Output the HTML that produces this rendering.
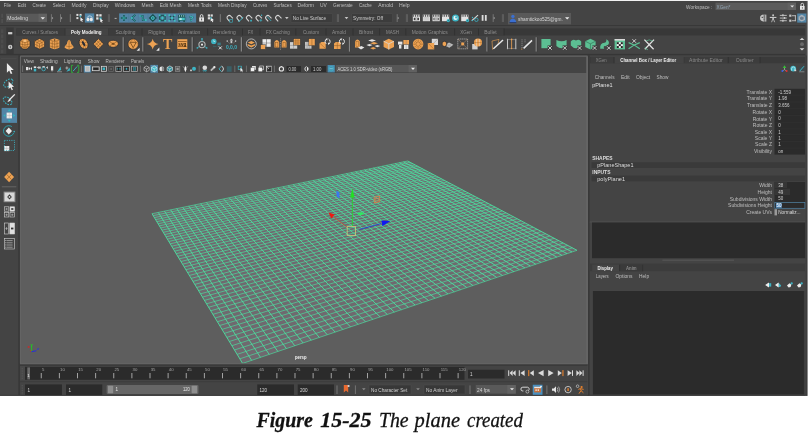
<!DOCTYPE html>
<html lang="en"><head><meta charset="utf-8"><title>Figure 15-25 The plane created</title>
<style>html,body{margin:0;padding:0;background:#ffffff;overflow:hidden}svg{display:block;opacity:0.999;will-change:transform}text{white-space:pre}</style>
</head><body>
<svg width="808" height="441" viewBox="0 0 808 441" font-family='"Liberation Sans", "DejaVu Sans", sans-serif'>
<rect x="0" y="0" width="808" height="441" fill="#ffffff" />
<defs><filter id="soft" x="0" y="0" width="808" height="400" filterUnits="userSpaceOnUse" color-interpolation-filters="sRGB"><feGaussianBlur stdDeviation="0.32"/></filter></defs>
<g filter="url(#soft)">
<rect x="0" y="0.9" width="807" height="394.6" fill="#444444" />
<rect x="0" y="0.9" width="808" height="394.6" fill="#444444" />
<rect x="806.9" y="0.9" width="1.1" height="394.6" fill="#8c8c8c" />
<rect x="805.9" y="55.5" width="1" height="340" fill="#3c3c3c" />
<rect x="0" y="0" width="808" height="1" fill="#f2f2f2" />
<text x="3.75" y="7" font-size="5" fill="#bfbfbf" textLength="7.25" lengthAdjust="spacingAndGlyphs" >File</text>
<text x="17.75" y="7" font-size="5" fill="#bfbfbf" textLength="8.25" lengthAdjust="spacingAndGlyphs" >Edit</text>
<text x="32.5" y="7" font-size="5" fill="#bfbfbf" textLength="13.5" lengthAdjust="spacingAndGlyphs" >Create</text>
<text x="52.75" y="7" font-size="5" fill="#bfbfbf" textLength="12.25" lengthAdjust="spacingAndGlyphs" >Select</text>
<text x="71.5" y="7" font-size="5" fill="#bfbfbf" textLength="15" lengthAdjust="spacingAndGlyphs" >Modify</text>
<text x="93" y="7" font-size="5" fill="#bfbfbf" textLength="15.75" lengthAdjust="spacingAndGlyphs" >Display</text>
<text x="114.75" y="7" font-size="5" fill="#bfbfbf" textLength="20.65" lengthAdjust="spacingAndGlyphs" >Windows</text>
<text x="141.6" y="7" font-size="5" fill="#bfbfbf" textLength="11.9" lengthAdjust="spacingAndGlyphs" >Mesh</text>
<text x="159.75" y="7" font-size="5" fill="#bfbfbf" textLength="21.85" lengthAdjust="spacingAndGlyphs" >Edit Mesh</text>
<text x="187.9" y="7" font-size="5" fill="#bfbfbf" textLength="23.85" lengthAdjust="spacingAndGlyphs" >Mesh Tools</text>
<text x="218" y="7" font-size="5" fill="#bfbfbf" textLength="28.6" lengthAdjust="spacingAndGlyphs" >Mesh Display</text>
<text x="253" y="7" font-size="5" fill="#bfbfbf" textLength="14.25" lengthAdjust="spacingAndGlyphs" >Curves</text>
<text x="273.5" y="7" font-size="5" fill="#bfbfbf" textLength="18.25" lengthAdjust="spacingAndGlyphs" >Surfaces</text>
<text x="297.6" y="7" font-size="5" fill="#bfbfbf" textLength="16.4" lengthAdjust="spacingAndGlyphs" >Deform</text>
<text x="319.9" y="7" font-size="5" fill="#bfbfbf" textLength="6.85" lengthAdjust="spacingAndGlyphs" >UV</text>
<text x="333" y="7" font-size="5" fill="#bfbfbf" textLength="19.75" lengthAdjust="spacingAndGlyphs" >Generate</text>
<text x="359" y="7" font-size="5" fill="#bfbfbf" textLength="12.75" lengthAdjust="spacingAndGlyphs" >Cache</text>
<text x="378.25" y="7" font-size="5" fill="#bfbfbf" textLength="14.75" lengthAdjust="spacingAndGlyphs" >Arnold</text>
<text x="399" y="7" font-size="5" fill="#bfbfbf" textLength="10.6" lengthAdjust="spacingAndGlyphs" >Help</text>
<text x="686" y="8.9" font-size="5" fill="#bfbfbf" textLength="26.4" lengthAdjust="spacingAndGlyphs" >Workspace :</text>
<rect x="715.5" y="2.75" width="80.5" height="7.25" fill="#5b5b5b" />
<rect x="787.6" y="2.75" width="8.4" height="7.25" fill="#616161" />
<text x="716.6" y="8.9" font-size="5" fill="#93a6b6" textLength="13.8" lengthAdjust="spacingAndGlyphs" >XGen*</text>
<polygon points="790.3,5.4 794.1,5.4 792.2,7.6" fill="#e0e0e0" />
<rect x="800" y="6" width="4.6" height="3.8" fill="#e6e6e6" />
<path d="M801 6 V4.6 A1.3 1.3 0 0 1 803.6 4.6 V6" fill="none" stroke="#e6e6e6" stroke-width="0.9" />
<rect x="801.9" y="7.2" width="0.8" height="1.4" fill="#444" />
<rect x="1.2" y="13.8" width="1.8" height="4" fill="#4f4f4f" />
<rect x="1.2" y="19" width="1.8" height="4" fill="#4f4f4f" />
<rect x="6" y="13.75" width="41" height="8.15" fill="#595959" />
<rect x="38.5" y="13.75" width="8.5" height="8.15" fill="#626262" />
<text x="7.25" y="20.2" font-size="5.2" fill="#d4d4d4" textLength="20.75" lengthAdjust="spacingAndGlyphs" >Modeling</text>
<polygon points="40.6,17.3 45,17.3 42.8,19.6" fill="#eaeaea" />
<line x1="51.4" y1="14.2" x2="51.4" y2="22" stroke="#8a8a8a" stroke-width="0.7" />
<polygon points="51.9,16.8 53.3,18.1 51.9,19.4" fill="#9a9a9a" />
<line x1="60.5" y1="14.2" x2="60.5" y2="22" stroke="#8a8a8a" stroke-width="0.7" />
<polygon points="61,16.8 62.4,18.1 61,19.4" fill="#9a9a9a" />
<line x1="70.5" y1="14.2" x2="70.5" y2="22" stroke="#8a8a8a" stroke-width="0.7" />
<line x1="69.7" y1="14.2" x2="69.7" y2="22" stroke="#5a5a5a" stroke-width="0.6" />
<rect x="76.4" y="13.9" width="2" height="2" fill="#e0e0e0" />
<rect x="76.4" y="17.1" width="2" height="2" fill="#e0e0e0" />
<rect x="79.6" y="13.9" width="2" height="2" fill="#e0e0e0" />
<polygon points="80.4,16.9 83.4,20.1 82,20.2 82.7,21.9 81.9,22.1 81.3,20.5 80.4,21.3" fill="#f0f0f0" />
<rect x="79.6" y="15.5" width="1.6" height="1.6" fill="#3db4c4" />
<rect x="84.9" y="13.4" width="9.3" height="9.2" fill="#5285a6" />
<ellipse cx="88" cy="19.4" rx="1.5" ry="1.9" fill="#e8e8e8" />
<ellipse cx="91.3" cy="19.4" rx="1.5" ry="1.9" fill="#e8e8e8" />
<path d="M87 17.6 A3 3 0 0 1 92.4 17.6" fill="none" stroke="#d8e8f0" stroke-width="0.7" />
<rect x="96.2" y="14.2" width="2.3" height="2.3" fill="#e4e4e4" />
<rect x="99.3" y="14.2" width="2.3" height="2.3" fill="#e4e4e4" />
<rect x="96.2" y="17.3" width="2.3" height="2.3" fill="#e4e4e4" />
<rect x="99.4" y="17.4" width="2.2" height="2.2" fill="#3db4c4" />
<polygon points="100.2,18.2 103.2,21 101.9,21.1 102.5,22.6 101.8,22.8 101.2,21.4 100.3,22.2" fill="#f0f0f0" />
<line x1="109" y1="14.2" x2="109" y2="22" stroke="#8a8a8a" stroke-width="0.7" />
<line x1="108.2" y1="14.2" x2="108.2" y2="22" stroke="#5a5a5a" stroke-width="0.6" />
<rect x="114.6" y="17.9" width="2" height="0.9" fill="#bdbdbd" />
<rect x="119.1" y="13.4" width="77" height="9.2" fill="#5285a6" />
<line x1="128.72" y1="13.4" x2="128.72" y2="22.6" stroke="#4a7898" stroke-width="0.5" />
<line x1="138.35" y1="13.4" x2="138.35" y2="22.6" stroke="#4a7898" stroke-width="0.5" />
<line x1="147.97" y1="13.4" x2="147.97" y2="22.6" stroke="#4a7898" stroke-width="0.5" />
<line x1="157.6" y1="13.4" x2="157.6" y2="22.6" stroke="#4a7898" stroke-width="0.5" />
<line x1="167.22" y1="13.4" x2="167.22" y2="22.6" stroke="#4a7898" stroke-width="0.5" />
<line x1="176.85" y1="13.4" x2="176.85" y2="22.6" stroke="#4a7898" stroke-width="0.5" />
<line x1="186.47" y1="13.4" x2="186.47" y2="22.6" stroke="#4a7898" stroke-width="0.5" />
<line x1="120.91" y1="18" x2="126.91" y2="18" stroke="#164f4c" stroke-width="1.7" />
<line x1="123.91" y1="15" x2="123.91" y2="21" stroke="#164f4c" stroke-width="1.7" />
<line x1="121.51" y1="18" x2="126.31" y2="18" stroke="#3fc0c0" stroke-width="0.7" />
<line x1="123.91" y1="15.6" x2="123.91" y2="20.4" stroke="#3fc0c0" stroke-width="0.7" />
<path d="M135.34 14.8 L131.64 18 L135.34 21.2" fill="none" stroke="#164f4c" stroke-width="1.6" />
<path d="M135.14 15 L131.84 18 L135.14 21" fill="none" stroke="#3fc0c0" stroke-width="0.6" />
<circle cx="131.74" cy="18" r="1" fill="#3fc0c0" />
<path d="M139.96 16 H142.76 V20 H145.96" fill="none" stroke="#164f4c" stroke-width="1.7" />
<path d="M140.16 16 H142.76 V20 H145.76" fill="none" stroke="#3fc0c0" stroke-width="0.7" />
<circle cx="145.76" cy="20" r="0.9" fill="#3fc0c0" />
<circle cx="140.16" cy="16" r="0.8" fill="#3fc0c0" />
<polygon points="152.79,14.8 155.99,18 152.79,21.2 149.59,18" fill="none" stroke="#164f4c" stroke-width="1.3"/>
<circle cx="152.79" cy="18" r="1.7" fill="#3fc0c0" />
<circle cx="152.79" cy="18" r="0.7" fill="#164f4c" />
<rect x="159.71" y="15.3" width="5.4" height="5.4" fill="none" stroke="#164f4c" stroke-width="1.1"/>
<line x1="159.71" y1="15.3" x2="165.11" y2="20.7" stroke="#164f4c" stroke-width="0.8" />
<line x1="165.11" y1="15.3" x2="159.71" y2="20.7" stroke="#164f4c" stroke-width="0.8" />
<circle cx="159.71" cy="15.3" r="1" fill="#3fc0c0" />
<circle cx="159.71" cy="20.7" r="1" fill="#3fc0c0" />
<circle cx="165.11" cy="15.3" r="1" fill="#3fc0c0" />
<circle cx="165.11" cy="20.7" r="1" fill="#3fc0c0" />
<circle cx="162.41" cy="18" r="1.3" fill="#3fc0c0" />
<line x1="169.34" y1="15.3" x2="174.74" y2="20.7" stroke="#164f4c" stroke-width="1.1" />
<line x1="174.74" y1="15.3" x2="169.34" y2="20.7" stroke="#164f4c" stroke-width="1.1" />
<circle cx="169.34" cy="15.3" r="1" fill="#3fc0c0" />
<circle cx="169.34" cy="20.7" r="1" fill="#3fc0c0" />
<circle cx="174.74" cy="15.3" r="1" fill="#3fc0c0" />
<circle cx="174.74" cy="20.7" r="1" fill="#3fc0c0" />
<circle cx="172.04" cy="18" r="1.2" fill="#3fc0c0" />
<rect x="178.26" y="14.8" width="6.8" height="2.4" fill="#164f4c" />
<rect x="179.06" y="15.2" width="1" height="1.5" fill="#9fd8d8" />
<rect x="181.16" y="15.2" width="1" height="1.5" fill="#9fd8d8" />
<rect x="183.26" y="15.2" width="1" height="1.5" fill="#9fd8d8" />
<rect x="178.26" y="17.6" width="6.8" height="3" fill="#3fc0c0" stroke="#164f4c" stroke-width="0.5"/>
<rect x="178.26" y="20.6" width="1.8" height="1.2" fill="#164f4c" />
<rect x="183.26" y="20.6" width="1.8" height="1.2" fill="#164f4c" />
<rect x="179.46" y="18.3" width="2.2" height="1.5" fill="#d8f0f0" />
<text x="191.29" y="21.3" font-size="7.6" fill="#3fc0c0" text-anchor="middle" font-weight="bold" stroke="#164f4c" stroke-width="0.5" paint-order="stroke">?</text>
<rect x="199.2" y="17.4" width="4.8" height="4.2" fill="#e6e6e6" />
<path d="M200.3 17.4 V15.9 A1.3 1.3 0 0 1 202.9 15.9 V17.4" fill="none" stroke="#e6e6e6" stroke-width="0.9" />
<rect x="201.1" y="18.5" width="1" height="1.9" fill="#555" />
<rect x="207.8" y="14.4" width="2.2" height="2.2" fill="#dcdcdc" />
<rect x="210.6" y="14.4" width="2.2" height="2.2" fill="#dcdcdc" />
<rect x="207.8" y="17.2" width="2.2" height="2.2" fill="#dcdcdc" />
<polygon points="210.6,17 214,20.2 212.6,20.3 213.3,22 212.5,22.3 211.8,20.7 210.7,21.6" fill="#f2f2f2" />
<rect x="210.2" y="17.2" width="1.5" height="1.5" fill="#3db4c4" />
<line x1="220.5" y1="14.2" x2="220.5" y2="22" stroke="#8a8a8a" stroke-width="0.7" />
<line x1="219.7" y1="14.2" x2="219.7" y2="22" stroke="#5a5a5a" stroke-width="0.6" />
<g transform="rotate(-42 229.5 18)">
<path d="M227.3 20.6 V17.6 A2.2 2.2 0 0 1 231.7 17.6 V20.6" fill="none" stroke="#d6d6d6" stroke-width="1.05" />
</g>
<rect x="229.8" y="19.6" width="2.6" height="2.6" fill="none" stroke="#3db4c4" stroke-width="0.6"/>
<g transform="rotate(-42 239.5 18)">
<path d="M237.3 20.6 V17.6 A2.2 2.2 0 0 1 241.7 17.6 V20.6" fill="none" stroke="#d6d6d6" stroke-width="1.05" />
</g>
<path d="M238.2 21.6 Q240.7 21 243 17" fill="none" stroke="#3db4c4" stroke-width="0.9" />
<g transform="rotate(-42 248.9 18)">
<path d="M246.7 20.6 V17.6 A2.2 2.2 0 0 1 251.1 17.6 V20.6" fill="none" stroke="#d6d6d6" stroke-width="1.05" />
</g>
<rect x="250.2" y="19.8" width="1.7" height="1.7" fill="#3db4c4" />
<g transform="rotate(-42 258.5 18)">
<path d="M256.3 20.6 V17.6 A2.2 2.2 0 0 1 260.7 17.6 V20.6" fill="none" stroke="#d6d6d6" stroke-width="1.05" />
</g>
<line x1="259.4" y1="20.3" x2="262.2" y2="20.3" stroke="#3db4c4" stroke-width="0.7" />
<line x1="260.8" y1="18.9" x2="260.8" y2="21.7" stroke="#3db4c4" stroke-width="0.7" />
<circle cx="261.6" cy="15.3" r="0.7" fill="#3db4c4" />
<g transform="rotate(-42 268.1 18)">
<path d="M265.9 20.6 V17.6 A2.2 2.2 0 0 1 270.3 17.6 V20.6" fill="none" stroke="#d6d6d6" stroke-width="1.05" />
</g>
<line x1="267" y1="16.4" x2="271.2" y2="21" stroke="#3db4c4" stroke-width="0.8" />
<g transform="rotate(-42 278.1 18)">
<path d="M275.9 20.6 V17.6 A2.2 2.2 0 0 1 280.3 17.6 V20.6" fill="none" stroke="#d6d6d6" stroke-width="1.05" />
</g>
<polygon points="285,17.1 288.6,17.1 286.8,19.2" fill="#c6c6c6" />
<rect x="291" y="13.75" width="41.4" height="8.5" fill="#3c3c3c" />
<rect x="291" y="13.75" width="41.4" height="8.5" fill="none" stroke="#4c4c4c" stroke-width="0.5"/>
<text x="292.8" y="19.8" font-size="5" fill="#d0d0d0" textLength="33.2" lengthAdjust="spacingAndGlyphs" >No Live Surface</text>
<line x1="338" y1="14.2" x2="338" y2="22" stroke="#8a8a8a" stroke-width="0.7" />
<line x1="337.2" y1="14.2" x2="337.2" y2="22" stroke="#5a5a5a" stroke-width="0.6" />
<polygon points="344.7,17.1 348.3,17.1 346.5,19.2" fill="#c6c6c6" />
<rect x="351.75" y="13.75" width="40.65" height="8.5" fill="#3c3c3c" />
<rect x="351.75" y="13.75" width="40.65" height="8.5" fill="none" stroke="#4c4c4c" stroke-width="0.5"/>
<text x="353" y="19.8" font-size="5" fill="#d0d0d0" textLength="30" lengthAdjust="spacingAndGlyphs" >Symmetry: Off</text>
<line x1="397.2" y1="14.2" x2="397.2" y2="22" stroke="#8a8a8a" stroke-width="0.7" />
<polygon points="397.7,16.8 399.1,18.1 397.7,19.4" fill="#9a9a9a" />
<line x1="407" y1="14.2" x2="407" y2="22" stroke="#8a8a8a" stroke-width="0.7" />
<line x1="406.2" y1="14.2" x2="406.2" y2="22" stroke="#5a5a5a" stroke-width="0.6" />
<rect x="412.8" y="14.6" width="7.2" height="6.6" fill="#e2e2e2" />
<rect x="413.3" y="14.6" width="0.8" height="2.2" fill="#3e3e3e" />
<rect x="415.1" y="14.6" width="0.8" height="2.2" fill="#3e3e3e" />
<rect x="416.9" y="14.6" width="0.8" height="2.2" fill="#3e3e3e" />
<rect x="418.7" y="14.6" width="0.8" height="2.2" fill="#3e3e3e" />
<rect x="413.8" y="17.8" width="5.2" height="2.4" fill="#3e3e3e" />
<rect x="415.4" y="18.2" width="2" height="1.6" fill="#e2e2e2" />
<rect x="422.8" y="14.6" width="7.2" height="6.6" fill="#e2e2e2" />
<rect x="423.3" y="14.6" width="0.8" height="2.2" fill="#3e3e3e" />
<rect x="425.1" y="14.6" width="0.8" height="2.2" fill="#3e3e3e" />
<rect x="426.9" y="14.6" width="0.8" height="2.2" fill="#3e3e3e" />
<rect x="428.7" y="14.6" width="0.8" height="2.2" fill="#3e3e3e" />
<line x1="423.4" y1="17.6" x2="429.4" y2="17.6" stroke="#9a9a9a" stroke-width="0.4" />
<line x1="423.4" y1="18.8" x2="429.4" y2="18.8" stroke="#9a9a9a" stroke-width="0.4" />
<line x1="423.4" y1="20" x2="429.4" y2="20" stroke="#9a9a9a" stroke-width="0.4" />
<rect x="432.5" y="14.6" width="7.2" height="6.6" fill="#e2e2e2" />
<rect x="433" y="14.6" width="0.8" height="2.2" fill="#3e3e3e" />
<rect x="434.8" y="14.6" width="0.8" height="2.2" fill="#3e3e3e" />
<rect x="436.6" y="14.6" width="0.8" height="2.2" fill="#3e3e3e" />
<rect x="438.4" y="14.6" width="0.8" height="2.2" fill="#3e3e3e" />
<rect x="433.5" y="17.8" width="5.2" height="2.4" fill="#3e3e3e" />
<rect x="434.3" y="18.3" width="3.6" height="1.4" fill="#e2e2e2" />
<rect x="442" y="14.6" width="7.2" height="6.6" fill="#e2e2e2" />
<rect x="442.5" y="14.6" width="0.8" height="2.2" fill="#3e3e3e" />
<rect x="444.3" y="14.6" width="0.8" height="2.2" fill="#3e3e3e" />
<rect x="446.1" y="14.6" width="0.8" height="2.2" fill="#3e3e3e" />
<rect x="447.9" y="14.6" width="0.8" height="2.2" fill="#3e3e3e" />
<circle cx="448.3" cy="20.6" r="1.6" fill="#3db4c4" />
<circle cx="448.3" cy="20.6" r="0.6" fill="#1f6f78" />
<circle cx="455.5" cy="17.9" r="3.5" fill="#3db4c4" />
<circle cx="455.5" cy="17.9" r="2.1" fill="#e8f4f6" />
<circle cx="456.2" cy="17.4" r="1.1" fill="#3db4c4" />
<rect x="461.2" y="14.6" width="7.2" height="6.6" fill="#e2e2e2" />
<rect x="461.7" y="14.6" width="0.8" height="2.2" fill="#3e3e3e" />
<rect x="463.5" y="14.6" width="0.8" height="2.2" fill="#3e3e3e" />
<rect x="465.3" y="14.6" width="0.8" height="2.2" fill="#3e3e3e" />
<rect x="467.1" y="14.6" width="0.8" height="2.2" fill="#3e3e3e" />
<circle cx="467.5" cy="20.6" r="1.6" fill="#3db4c4" />
<circle cx="467.5" cy="20.6" r="0.6" fill="#1f6f78" />
<path d="M471.8 20.6 L478 15.2" fill="none" stroke="#dcdcdc" stroke-width="1.1" />
<circle cx="476.4" cy="19.8" r="1.7" fill="none" stroke="#3db4c4" stroke-width="0.8"/>
<circle cx="472.5" cy="17.5" r="0.7" fill="#3db4c4" />
<circle cx="472.3" cy="20.5" r="0.7" fill="#3db4c4" />
<rect x="481.7" y="15" width="1.8" height="5.8" fill="#dcdcdc" />
<rect x="484.9" y="15" width="1.8" height="5.8" fill="#dcdcdc" />
<line x1="493.2" y1="14.2" x2="493.2" y2="22" stroke="#8a8a8a" stroke-width="0.7" />
<polygon points="493.7,16.8 495.1,18.1 493.7,19.4" fill="#9a9a9a" />
<line x1="503" y1="14.2" x2="503" y2="22" stroke="#8a8a8a" stroke-width="0.7" />
<line x1="502.2" y1="14.2" x2="502.2" y2="22" stroke="#5a5a5a" stroke-width="0.6" />
<rect x="508" y="13" width="63" height="11.4" fill="#595959" />
<circle cx="512.9" cy="16.4" r="1.7" fill="#3b6fd0" />
<path d="M509.6 22.6 Q509.8 19 512.9 18.6 Q516 19 516.2 22.6 Z" fill="#3b6fd0" stroke="none" stroke-width="1" />
<line x1="509.4" y1="22.7" x2="516.4" y2="22.7" stroke="#1c2c5c" stroke-width="0.8" />
<text x="518" y="20.8" font-size="5" fill="#d6d6d6" textLength="44.75" lengthAdjust="spacingAndGlyphs" >shamtickoo525@gm.</text>
<polygon points="565,17.3 569.4,17.3 567.2,19.6" fill="#ececec" />
<rect x="797.2" y="13.5" width="9.2" height="9.1" fill="#5285a6" />
<path d="M764.6 14.6 Q760 14.6 760 18 Q760 21.6 764.6 21.6 Z" fill="#c6c6c6" stroke="none" stroke-width="1" />
<rect x="763.2" y="15.6" width="3.4" height="0.9" fill="#555" />
<rect x="763.2" y="17.5" width="3.4" height="0.9" fill="#555" />
<rect x="763.2" y="19.4" width="3.4" height="0.9" fill="#555" />
<rect x="765.2" y="14.6" width="1.1" height="7" fill="#c6c6c6" />
<rect x="761.6" y="16.8" width="1.4" height="1.2" fill="#555" />
<circle cx="773.1" cy="15.2" r="1" fill="#c6c6c6" />
<rect x="769.8" y="16.9" width="6.6" height="1.1" fill="#c6c6c6" />
<rect x="772.3" y="16.9" width="1.6" height="3" fill="#c6c6c6" />
<line x1="772.5" y1="19.6" x2="771.6" y2="22.2" stroke="#c6c6c6" stroke-width="0.8" />
<line x1="773.7" y1="19.6" x2="774.6" y2="22.2" stroke="#c6c6c6" stroke-width="0.8" />
<rect x="779.8" y="14.9" width="7" height="0.9" fill="#c6c6c6" />
<rect x="782.2" y="14.3" width="1.4" height="2" fill="#c6c6c6" />
<rect x="779.8" y="17.6" width="7" height="0.9" fill="#c6c6c6" />
<rect x="783.8" y="17" width="1.4" height="2" fill="#c6c6c6" />
<rect x="779.8" y="20.3" width="7" height="0.9" fill="#c6c6c6" />
<rect x="782.2" y="19.7" width="1.4" height="2" fill="#c6c6c6" />
<rect x="789.2" y="14.6" width="2.2" height="2.2" fill="#c6c6c6" />
<rect x="789.2" y="19.6" width="2.2" height="2.2" fill="#c6c6c6" />
<rect x="792" y="15.3" width="3.8" height="0.9" fill="#c6c6c6" />
<rect x="792" y="20.3" width="3.8" height="0.9" fill="#c6c6c6" />
<rect x="794.9" y="15.3" width="0.9" height="5.9" fill="#c6c6c6" />
<polygon points="801.8,14.8 805,16.4 805,20 801.8,21.6 798.6,20 798.6,16.4" fill="#aab4bc" />
<polygon points="801.8,16.6 803.6,17.5 803.6,19.2 801.8,20.1 800,19.2 800,17.5" fill="#66788a" />
<line x1="798.6" y1="16.4" x2="801.8" y2="18" stroke="#7a8894" stroke-width="0.5" />
<line x1="805" y1="16.4" x2="801.8" y2="18" stroke="#7a8894" stroke-width="0.5" />
<rect x="0" y="25" width="805.2" height="1" fill="#383838" />
<rect x="1" y="29.4" width="2.4" height="3.8" fill="#4c4c4c" />
<rect x="1" y="34.45" width="2.4" height="3.8" fill="#4c4c4c" />
<rect x="1" y="39.5" width="2.4" height="3.8" fill="#4c4c4c" />
<rect x="1" y="44.55" width="2.4" height="3.8" fill="#4c4c4c" />
<rect x="1" y="49.6" width="2.4" height="3.8" fill="#4c4c4c" />
<rect x="6.25" y="27.6" width="7.5" height="26.4" fill="#383838" />
<rect x="8.1" y="32.1" width="4.2" height="2.2" fill="#cfcfcf" />
<circle cx="10.2" cy="47" r="2.2" fill="#cdcdcd" />
<rect x="9.8" y="45.8" width="0.8" height="2.4" fill="#444" />
<rect x="16.25" y="28.4" width="788.95" height="7" fill="#383838" />
<rect x="16.25" y="28.4" width="48.5" height="7" fill="#3c3c3c" />
<line x1="65.25" y1="28.4" x2="65.25" y2="35.4" stroke="#303030" stroke-width="0.8" />
<text x="22.25" y="34" font-size="5" fill="#8e8e8e" textLength="35.75" lengthAdjust="spacingAndGlyphs" >Curves / Surfaces</text>
<rect x="65.4" y="28.4" width="42.8" height="7.2" fill="#444444" />
<text x="71" y="34" font-size="5" fill="#f0f0f0" font-weight="bold" textLength="30.6" lengthAdjust="spacingAndGlyphs" >Poly Modeling</text>
<rect x="108.6" y="28.4" width="33" height="7" fill="#3c3c3c" />
<line x1="142.1" y1="28.4" x2="142.1" y2="35.4" stroke="#303030" stroke-width="0.8" />
<text x="115.4" y="34" font-size="5" fill="#8e8e8e" textLength="20" lengthAdjust="spacingAndGlyphs" >Sculpting</text>
<rect x="142.6" y="28.4" width="29" height="7" fill="#3c3c3c" />
<line x1="172.1" y1="28.4" x2="172.1" y2="35.4" stroke="#303030" stroke-width="0.8" />
<text x="148.25" y="34" font-size="5" fill="#8e8e8e" textLength="17.15" lengthAdjust="spacingAndGlyphs" >Rigging</text>
<rect x="172.6" y="28.4" width="34.6" height="7" fill="#3c3c3c" />
<line x1="207.7" y1="28.4" x2="207.7" y2="35.4" stroke="#303030" stroke-width="0.8" />
<text x="177.9" y="34" font-size="5" fill="#8e8e8e" textLength="22.5" lengthAdjust="spacingAndGlyphs" >Animation</text>
<rect x="208.2" y="28.4" width="33.8" height="7" fill="#3c3c3c" />
<line x1="242.5" y1="28.4" x2="242.5" y2="35.4" stroke="#303030" stroke-width="0.8" />
<text x="213" y="34" font-size="5" fill="#8e8e8e" textLength="22.75" lengthAdjust="spacingAndGlyphs" >Rendering</text>
<rect x="243" y="28.4" width="16.6" height="7" fill="#3c3c3c" />
<line x1="260.1" y1="28.4" x2="260.1" y2="35.4" stroke="#303030" stroke-width="0.8" />
<text x="248" y="34" font-size="5" fill="#8e8e8e" textLength="5.25" lengthAdjust="spacingAndGlyphs" >FX</text>
<rect x="260.6" y="28.4" width="34.8" height="7" fill="#3c3c3c" />
<line x1="295.9" y1="28.4" x2="295.9" y2="35.4" stroke="#303030" stroke-width="0.8" />
<text x="266" y="34" font-size="5" fill="#8e8e8e" textLength="23.75" lengthAdjust="spacingAndGlyphs" >FX Caching</text>
<rect x="296.4" y="28.4" width="29.2" height="7" fill="#3c3c3c" />
<line x1="326.1" y1="28.4" x2="326.1" y2="35.4" stroke="#303030" stroke-width="0.8" />
<text x="303" y="34" font-size="5" fill="#8e8e8e" textLength="16" lengthAdjust="spacingAndGlyphs" >Custom</text>
<rect x="326.6" y="28.4" width="26" height="7" fill="#3c3c3c" />
<line x1="353.1" y1="28.4" x2="353.1" y2="35.4" stroke="#303030" stroke-width="0.8" />
<text x="332" y="34" font-size="5" fill="#8e8e8e" textLength="14" lengthAdjust="spacingAndGlyphs" >Arnold</text>
<rect x="353.6" y="28.4" width="25.6" height="7" fill="#3c3c3c" />
<line x1="379.7" y1="28.4" x2="379.7" y2="35.4" stroke="#303030" stroke-width="0.8" />
<text x="359" y="34" font-size="5" fill="#8e8e8e" textLength="14" lengthAdjust="spacingAndGlyphs" >Bifrost</text>
<rect x="380.2" y="28.4" width="25.2" height="7" fill="#3c3c3c" />
<line x1="405.9" y1="28.4" x2="405.9" y2="35.4" stroke="#303030" stroke-width="0.8" />
<text x="386" y="34" font-size="5" fill="#8e8e8e" textLength="13" lengthAdjust="spacingAndGlyphs" >MASH</text>
<rect x="406.4" y="28.4" width="47.8" height="7" fill="#3c3c3c" />
<line x1="454.7" y1="28.4" x2="454.7" y2="35.4" stroke="#303030" stroke-width="0.8" />
<text x="411.75" y="34" font-size="5" fill="#8e8e8e" textLength="36" lengthAdjust="spacingAndGlyphs" >Motion Graphics</text>
<rect x="455.2" y="28.4" width="22.8" height="7" fill="#3c3c3c" />
<line x1="478.5" y1="28.4" x2="478.5" y2="35.4" stroke="#303030" stroke-width="0.8" />
<text x="460.25" y="34" font-size="5" fill="#8e8e8e" textLength="11.5" lengthAdjust="spacingAndGlyphs" >XGen</text>
<rect x="479" y="28.4" width="24.6" height="7" fill="#3c3c3c" />
<line x1="504.1" y1="28.4" x2="504.1" y2="35.4" stroke="#303030" stroke-width="0.8" />
<text x="484.25" y="34" font-size="5" fill="#8e8e8e" textLength="12.5" lengthAdjust="spacingAndGlyphs" >Bullet</text>
<line x1="123.25" y1="37.2" x2="123.25" y2="51.6" stroke="#8c8c8c" stroke-width="1.2" />
<line x1="124.15" y1="37.2" x2="124.15" y2="51.6" stroke="#343434" stroke-width="0.5" />
<line x1="142.9" y1="37.2" x2="142.9" y2="51.6" stroke="#8c8c8c" stroke-width="1.2" />
<line x1="143.8" y1="37.2" x2="143.8" y2="51.6" stroke="#343434" stroke-width="0.5" />
<line x1="192.25" y1="37.2" x2="192.25" y2="51.6" stroke="#8c8c8c" stroke-width="1.2" />
<line x1="193.15" y1="37.2" x2="193.15" y2="51.6" stroke="#343434" stroke-width="0.5" />
<line x1="241.4" y1="37.2" x2="241.4" y2="51.6" stroke="#8c8c8c" stroke-width="1.2" />
<line x1="242.3" y1="37.2" x2="242.3" y2="51.6" stroke="#343434" stroke-width="0.5" />
<line x1="349.5" y1="37.2" x2="349.5" y2="51.6" stroke="#8c8c8c" stroke-width="1.2" />
<line x1="350.4" y1="37.2" x2="350.4" y2="51.6" stroke="#343434" stroke-width="0.5" />
<line x1="487" y1="37.2" x2="487" y2="51.6" stroke="#8c8c8c" stroke-width="1.2" />
<line x1="487.9" y1="37.2" x2="487.9" y2="51.6" stroke="#343434" stroke-width="0.5" />
<line x1="536.25" y1="37.2" x2="536.25" y2="51.6" stroke="#8c8c8c" stroke-width="1.2" />
<line x1="537.15" y1="37.2" x2="537.15" y2="51.6" stroke="#343434" stroke-width="0.5" />
<polygon points="22.83,38.5 27.07,38.5 30,41.57 30,46.03 27.07,49.1 22.83,49.1 19.9,46.03 19.9,41.57" fill="#eda253" stroke="#26282e" stroke-width="0.7" stroke-linejoin="round"/>
<path d="M20.4 41.41 Q24.95 43.31 29.5 41.41" fill="none" stroke="#8c5a24" stroke-width="0.6" />
<path d="M20.4 44.06 Q24.95 45.96 29.5 44.06" fill="none" stroke="#8c5a24" stroke-width="0.6" />
<path d="M20.4 46.45 Q24.95 48.35 29.5 46.45" fill="none" stroke="#8c5a24" stroke-width="0.6" />
<path d="M23.43 38.77 Q21.16 43.8 23.43 48.83" fill="none" stroke="#8c5a24" stroke-width="0.55" />
<path d="M24.95 38.77 Q24.95 43.8 24.95 48.83" fill="none" stroke="#8c5a24" stroke-width="0.55" />
<path d="M26.46 38.77 Q28.74 43.8 26.46 48.83" fill="none" stroke="#8c5a24" stroke-width="0.55" />
<ellipse cx="24.95" cy="40.88" rx="1.77" ry="1.06" fill="#f6bd7a" />
<polygon points="39.5,38.5 44.6,41.09 44.6,46.71 39.5,49.3 34.4,46.71 34.4,41.09" fill="#eda253" stroke="#26282e" stroke-width="0.7" stroke-linejoin="round"/>
<path d="M34.4 41.09 L39.5 43.7 L44.6 41.09 M39.5 43.7 V49.3" fill="none" stroke="#8c5a24" stroke-width="0.65" />
<path d="M36.95 39.8 L42.05 42.39 V48 M42.05 39.8 L36.95 42.39 V48 M34.4 43.9 L39.5 46.6 L44.6 43.9" fill="none" stroke="#8c5a24" stroke-width="0.5" />
<path d="M49.9 40.1 Q54.65 36.9 59.4 40.1 V47.6 Q54.65 50.8 49.9 47.6 Z" fill="#eda253" stroke="none" stroke-width="1" stroke="#26282e" stroke-width="0.7" stroke-linejoin="round"/>
<path d="M49.9 40.1 Q54.65 43 59.4 40.1" fill="none" stroke="#8c5a24" stroke-width="0.55" />
<line x1="52.27" y1="41.2" x2="52.27" y2="48.8" stroke="#8c5a24" stroke-width="0.6" />
<line x1="54.65" y1="41.2" x2="54.65" y2="48.8" stroke="#8c5a24" stroke-width="0.6" />
<line x1="57.02" y1="41.2" x2="57.02" y2="48.8" stroke="#8c5a24" stroke-width="0.6" />
<path d="M49.9 43.03 Q54.65 45.43 59.4 43.03" fill="none" stroke="#8c5a24" stroke-width="0.55" />
<path d="M49.9 46.03 Q54.65 48.43 59.4 46.03" fill="none" stroke="#8c5a24" stroke-width="0.55" />
<circle cx="54.65" cy="40" r="0.7" fill="#3a2a18" />
<path d="M69.1 39.8 Q70.7 40.2 71.3 44.1 Q74.1 46.7 73.5 47.8 Q69.1 51.3 64.7 47.8 Q64.1 46.7 66.9 44.1 Q67.5 40.2 69.1 39.8 Z" fill="#eda253" stroke="none" stroke-width="1" stroke="#26282e" stroke-width="0.7" stroke-linejoin="round"/>
<line x1="69.1" y1="40.4" x2="69.1" y2="49.2" stroke="#8c5a24" stroke-width="0.6" />
<path d="M65.58 45.9 Q69.1 47.5 72.62 45.9" fill="none" stroke="#8c5a24" stroke-width="0.5" />
<g transform="rotate(-30 83.6 43.7)">
<ellipse cx="83.6" cy="43.7" rx="4.1" ry="5.6" fill="#eda253" stroke="#26282e" stroke-width="0.7" stroke-linejoin="round"/>
<ellipse cx="83.6" cy="43.7" rx="1.2" ry="2.9" fill="#2a2c34" />
<line x1="84.8" y1="43.7" x2="87.7" y2="43.7" stroke="#8c5a24" stroke-width="0.5" />
<line x1="84.45" y1="45.75" x2="86.5" y2="47.66" stroke="#8c5a24" stroke-width="0.5" />
<line x1="83.6" y1="46.6" x2="83.6" y2="49.3" stroke="#8c5a24" stroke-width="0.5" />
<line x1="82.75" y1="45.75" x2="80.7" y2="47.66" stroke="#8c5a24" stroke-width="0.5" />
<line x1="82.4" y1="43.7" x2="79.5" y2="43.7" stroke="#8c5a24" stroke-width="0.5" />
<line x1="82.75" y1="41.65" x2="80.7" y2="39.74" stroke="#8c5a24" stroke-width="0.5" />
<line x1="83.6" y1="40.8" x2="83.6" y2="38.1" stroke="#8c5a24" stroke-width="0.5" />
<line x1="84.45" y1="41.65" x2="86.5" y2="39.74" stroke="#8c5a24" stroke-width="0.5" />
</g>
<polygon points="98.4,38.6 103.6,43.95 98.4,49.3 93.2,43.95" fill="#eda253" stroke="#26282e" stroke-width="0.7" stroke-linejoin="round"/>
<line x1="94.93" y1="42.17" x2="100.13" y2="47.52" stroke="#8c5a24" stroke-width="0.6" />
<line x1="101.87" y1="42.17" x2="96.67" y2="47.52" stroke="#8c5a24" stroke-width="0.6" />
<line x1="96.67" y1="40.38" x2="101.87" y2="45.73" stroke="#8c5a24" stroke-width="0.6" />
<line x1="100.13" y1="40.38" x2="94.93" y2="45.73" stroke="#8c5a24" stroke-width="0.6" />
<ellipse cx="113.15" cy="43.8" rx="5.15" ry="3.5" fill="#eda253" stroke="#26282e" stroke-width="0.7" stroke-linejoin="round"/>
<ellipse cx="113.15" cy="43.8" rx="1.44" ry="1.05" fill="#5a3a18" />
<line x1="109.29" y1="41.52" x2="117.01" y2="46.07" stroke="#8c5a24" stroke-width="0.6" />
<line x1="117.01" y1="41.52" x2="109.29" y2="46.07" stroke="#8c5a24" stroke-width="0.6" />
<ellipse cx="133.2" cy="44.1" rx="5.3" ry="5.3" fill="#eda253" stroke="#26282e" stroke-width="0.7" stroke-linejoin="round"/>
<polygon points="130.2,42.3 136.2,42.3 133.2,47.7" fill="none" stroke="#6a4216" stroke-width="0.8"/>
<path d="M133.2 38.8 L130.2 42.3 M133.2 38.8 L136.2 42.3 M127.9 45.1 L130.2 42.3 M138.5 45.1 L136.2 42.3 M133.2 49.4 V47.7" fill="none" stroke="#8c5a24" stroke-width="0.45" />
<polygon points="139.6,47.8 139.6,50.8 136.6,50.8" fill="#e8e8e8" />
<path d="M152.7 38.7 Q153.6 43.2 158.5 44.1 Q153.6 45 152.7 49.5 Q151.8 45 146.9 44.1 Q151.8 43.2 152.7 38.7 Z" fill="#eda253" stroke="none" stroke-width="1" />
<polygon points="159.4,47.6 159.4,50.8 156.2,50.8" fill="#e8e8e8" />
<text x="167.6" y="49.2" font-size="14" fill="#eda253" text-anchor="middle" font-weight="bold" font-family='"Liberation Serif", "DejaVu Serif", serif' >T</text>
<rect x="177.3" y="39.2" width="10" height="9.8" fill="#eda253" />
<rect x="178" y="41.3" width="8.6" height="0.7" fill="#7a4a1a" />
<rect x="178" y="46.3" width="8.6" height="0.7" fill="#7a4a1a" />
<text x="182.3" y="45.5" font-size="4.6" fill="#3a2208" text-anchor="middle" font-weight="bold" >svg</text>
<circle cx="202" cy="44.6" r="3.1" fill="none" stroke="#b4b4b4" stroke-width="1.1"/>
<rect x="201.1" y="43.7" width="1.8" height="1.8" fill="#f4f4f4" />
<line x1="202" y1="41.4" x2="202" y2="38.8" stroke="#3db4c4" stroke-width="0.8" />
<line x1="199.4" y1="46.4" x2="197.4" y2="47.8" stroke="#3db4c4" stroke-width="0.8" />
<line x1="204.6" y1="46.4" x2="206.6" y2="47.8" stroke="#3db4c4" stroke-width="0.8" />
<rect x="201.2" y="38.2" width="1.6" height="1.4" fill="#3db4c4" />
<rect x="196.6" y="47.2" width="1.5" height="1.4" fill="#3db4c4" />
<rect x="205.9" y="47.2" width="1.5" height="1.4" fill="#3db4c4" />
<circle cx="213.8" cy="41.4" r="2.7" fill="#3db4c4" />
<path d="M213.8 39.8 V41.5 H215.2" fill="none" stroke="#e8f8fa" stroke-width="0.6" />
<rect x="217.4" y="42.6" width="3.3" height="2.7" fill="#3a7c88" />
<line x1="213.8" y1="44.6" x2="213.8" y2="47.6" stroke="#2a8a98" stroke-width="0.5" stroke-dasharray="0.8 0.6"/>
<line x1="213.8" y1="46.6" x2="218" y2="46.6" stroke="#2a8a98" stroke-width="0.5" stroke-dasharray="0.8 0.6"/>
<line x1="218.8" y1="46.4" x2="221.8" y2="49.4" stroke="#f0f0f0" stroke-width="0.9" />
<line x1="221.8" y1="46.4" x2="218.8" y2="49.4" stroke="#f0f0f0" stroke-width="0.9" />
<polygon points="231.4,38.4 233.2,40.6 229.6,40.6" fill="#c8c8c8" />
<rect x="230.5" y="40.6" width="1.8" height="2.6" fill="#c8c8c8" />
<line x1="229.6" y1="43.4" x2="227.4" y2="41.4" stroke="#bdbdbd" stroke-width="0.5" stroke-dasharray="0.7 0.5"/>
<line x1="233.2" y1="43.4" x2="235.4" y2="41.4" stroke="#bdbdbd" stroke-width="0.5" stroke-dasharray="0.7 0.5"/>
<rect x="226.6" y="40.4" width="1.3" height="1.3" fill="#cfcfcf" />
<rect x="234.9" y="40.4" width="1.3" height="1.3" fill="#cfcfcf" />
<text x="225.9" y="49" font-size="5" fill="#3db4c4" font-weight="bold" textLength="11.1" lengthAdjust="spacingAndGlyphs" >0,0,0</text>
<circle cx="251.3" cy="43.9" r="5" fill="none" stroke="#bcbcbc" stroke-width="0.9"/>
<polygon points="247.8,42.6 251.3,40.9 254.8,42.6 251.3,44.3" fill="#eda253" />
<polygon points="247.6,44 249.4,44.8 251.3,45.6 253.2,44.8 255,44 255,45.6 251.3,47.6 247.6,45.6" fill="#eda253" />
<rect x="262.5" y="39.2" width="3.9" height="3.6" fill="#ececec" />
<rect x="262.5" y="43.2" width="3.9" height="3.6" fill="#ececec" />
<rect x="266.8" y="39.2" width="3.9" height="3.6" fill="#ececec" />
<rect x="266.8" y="43.2" width="3.9" height="3.6" fill="#ececec" />
<rect x="260.6" y="44.7" width="4.8" height="4.6" fill="#eda253" stroke="#3a3a3a" stroke-width="0.5"/>
<path d="M274.4 42 Q276.8 38.2 279.2 42 V47.6 H274.4 Z" fill="#eda253" stroke="none" stroke-width="1" stroke="#26282e" stroke-width="0.7" stroke-linejoin="round"/>
<rect x="275.7" y="42.6" width="2.2" height="4.4" fill="none" stroke="#8c5a24" stroke-width="0.5"/>
<path d="M281.7 42 Q284.1 38.2 286.5 42 V47.6 H281.7 Z" fill="#eda253" stroke="none" stroke-width="1" stroke="#26282e" stroke-width="0.7" stroke-linejoin="round"/>
<rect x="283" y="42.6" width="2.2" height="4.4" fill="none" stroke="#8c5a24" stroke-width="0.5"/>
<line x1="280.5" y1="38.4" x2="280.5" y2="50" stroke="#d0d0d0" stroke-width="0.45" stroke-dasharray="1 0.8"/>
<rect x="290" y="42.1" width="7.2" height="6.6" fill="#cfcfcf" />
<line x1="293.6" y1="42.1" x2="293.6" y2="48.7" stroke="#7a7a7a" stroke-width="0.45" />
<line x1="290" y1="45.4" x2="297.2" y2="45.4" stroke="#7a7a7a" stroke-width="0.45" />
<rect x="293.6" y="38.8" width="6.6" height="6.3" fill="#eda253" stroke="#3a3a3a" stroke-width="0.4"/>
<line x1="295.8" y1="38.8" x2="295.8" y2="45.1" stroke="#8c5a24" stroke-width="0.45" />
<line x1="293.6" y1="40.9" x2="300.2" y2="40.9" stroke="#8c5a24" stroke-width="0.45" />
<line x1="298" y1="38.8" x2="298" y2="45.1" stroke="#8c5a24" stroke-width="0.45" />
<line x1="293.6" y1="43" x2="300.2" y2="43" stroke="#8c5a24" stroke-width="0.45" />
<rect x="305" y="41.9" width="6.5" height="6.8" fill="#c4c4c4" />
<line x1="307.17" y1="41.9" x2="307.17" y2="48.7" stroke="#8a8a8a" stroke-width="0.4" />
<line x1="309.34" y1="41.9" x2="309.34" y2="48.7" stroke="#8a8a8a" stroke-width="0.4" />
<line x1="305" y1="45.3" x2="311.5" y2="45.3" stroke="#8a8a8a" stroke-width="0.4" />
<rect x="308.8" y="38.8" width="6.2" height="6.7" fill="#eda253" stroke="#3a3a3a" stroke-width="0.4"/>
<line x1="311.9" y1="38.8" x2="311.9" y2="45.5" stroke="#8c5a24" stroke-width="0.5" />
<polygon points="319.5,43.6 321.4,41.9 325.7,41.9 325.7,48.7 319.5,48.7" fill="#eda253" />
<line x1="319.8" y1="43.2" x2="325.7" y2="48.7" stroke="#8c5a24" stroke-width="0.5" />
<path d="M326.6 39 A2.9 2.9 0 0 0 326.2 43.8" fill="none" stroke="#e8e8e8" stroke-width="1" />
<path d="M328.6 39 A2.9 2.9 0 0 1 329 43.8" fill="none" stroke="#e8e8e8" stroke-width="1" />
<polygon points="325.4,39.4 327.4,38 327.4,40.4" fill="#e8e8e8" />
<polygon points="330,43.6 328,45 328,42.6" fill="#e8e8e8" />
<polygon points="334,43.6 335.8,42.1 340.6,42.1 340.6,49 334,49" fill="#eda253" />
<line x1="337.3" y1="42.1" x2="337.3" y2="49" stroke="#8c5a24" stroke-width="0.5" />
<line x1="334" y1="45.6" x2="340.6" y2="45.6" stroke="#8c5a24" stroke-width="0.5" />
<path d="M340.9 39 A2.9 2.9 0 0 0 340.5 43.8" fill="none" stroke="#e8e8e8" stroke-width="1" />
<path d="M342.9 39 A2.9 2.9 0 0 1 343.3 43.8" fill="none" stroke="#e8e8e8" stroke-width="1" />
<polygon points="339.7,39.4 341.7,38 341.7,40.4" fill="#e8e8e8" />
<polygon points="344.3,43.6 342.3,45 342.3,42.6" fill="#e8e8e8" />
<path d="M355 41.2 Q357.4 38 359.8 41.2 V47.4 H355 Z" fill="#eda253" stroke="none" stroke-width="1" />
<rect x="356" y="41.8" width="2.6" height="5" fill="none" stroke="#8c5a24" stroke-width="0.4"/>
<polygon points="358,47.6 361.4,46 364.4,47.6 361,49.4" fill="#e4e4e4" />
<polygon points="372,39.2 376,40.4 372,41.8 368.2,40.4" fill="#e4e4e4" />
<polygon points="374,42 378,43.2 374,44.6 370.2,43.2" fill="#eda253" />
<polygon points="369.4,44 372.6,45 369.4,46.2 366.4,45" fill="#e4e4e4" />
<polygon points="377.4,45 380.2,46 377.4,47.2 374.6,46" fill="#e4e4e4" />
<polygon points="373.2,47 376.2,48.2 373.2,49.6 370.2,48.2" fill="#eda253" />
<polygon points="388.8,38.8 394,41.2 394,47 388.8,49.6 383.6,47 383.6,41.2" fill="#eda253" />
<path d="M383.6 41.2 L388.8 43.8 L394 41.2 M388.8 43.8 V49.6" fill="none" stroke="#d8d8d8" stroke-width="0.8" />
<rect x="398" y="41.6" width="4.4" height="3" fill="#e4e4e4" />
<rect x="399" y="45" width="2.4" height="3.6" fill="#e4e4e4" />
<rect x="403.4" y="40" width="5.6" height="4.4" fill="#eda253" />
<rect x="404" y="44.8" width="4.4" height="4.2" fill="#e4e4e4" />
<line x1="406.2" y1="40" x2="406.2" y2="49" stroke="#777" stroke-width="0.35" />
<circle cx="418.1" cy="44.1" r="5.3" fill="#eda253" />
<circle cx="418.1" cy="44.1" r="2.2" fill="none" stroke="#8c5a24" stroke-width="0.5"/>
<circle cx="418.1" cy="44.1" r="3.9" fill="none" stroke="#8c5a24" stroke-width="0.4" stroke-dasharray="1.2 1"/>
<line x1="420.3" y1="44.1" x2="423.4" y2="44.1" stroke="#8c5a24" stroke-width="0.35" />
<line x1="419.66" y1="45.66" x2="421.85" y2="47.85" stroke="#8c5a24" stroke-width="0.35" />
<line x1="418.1" y1="46.3" x2="418.1" y2="49.4" stroke="#8c5a24" stroke-width="0.35" />
<line x1="416.54" y1="45.66" x2="414.35" y2="47.85" stroke="#8c5a24" stroke-width="0.35" />
<line x1="415.9" y1="44.1" x2="412.8" y2="44.1" stroke="#8c5a24" stroke-width="0.35" />
<line x1="416.54" y1="42.54" x2="414.35" y2="40.35" stroke="#8c5a24" stroke-width="0.35" />
<line x1="418.1" y1="41.9" x2="418.1" y2="38.8" stroke="#8c5a24" stroke-width="0.35" />
<line x1="419.66" y1="42.54" x2="421.85" y2="40.35" stroke="#8c5a24" stroke-width="0.35" />
<rect x="431.8" y="38.8" width="6.2" height="6.2" fill="#d8d8d8" />
<line x1="431.8" y1="45" x2="438" y2="38.8" stroke="#777" stroke-width="0.4" />
<rect x="427.8" y="43" width="6.4" height="6.4" fill="#eda253" />
<line x1="427.8" y1="43" x2="434.2" y2="49.4" stroke="#8c5a24" stroke-width="0.45" />
<polygon points="449,42.4 453.4,44.8 449.4,47.8 444.6,45.6" fill="#bcbcbc" />
<line x1="446.8" y1="44" x2="451.4" y2="46.3" stroke="#8a8a8a" stroke-width="0.4" />
<line x1="451.2" y1="43.6" x2="447" y2="46.7" stroke="#8a8a8a" stroke-width="0.4" />
<polygon points="444.4,41.2 446.6,42.4 446.6,45.4 444.4,46.6 442.2,45.4 442.2,42.4" fill="#eda253" stroke="#26282e" stroke-width="0.7" stroke-linejoin="round"/>
<rect x="457.8" y="39" width="9.8" height="9.8" fill="none" stroke="#b4b4b4" stroke-width="0.7" stroke-dasharray="1.4 0.5"/>
<line x1="457.8" y1="39" x2="467.6" y2="48.8" stroke="#b89878" stroke-width="0.5" />
<line x1="467.6" y1="39" x2="457.8" y2="48.8" stroke="#b89878" stroke-width="0.5" />
<circle cx="462.7" cy="43.9" r="1.6" fill="#eda253" />
<rect x="472.2" y="44" width="5.4" height="5.4" fill="#d0d0d0" />
<circle cx="478" cy="42.6" r="4" fill="#eda253" />
<line x1="476.6" y1="39" x2="476.6" y2="46.2" stroke="#e4e4e4" stroke-width="0.5" />
<line x1="479.4" y1="39" x2="479.4" y2="46.2" stroke="#e4e4e4" stroke-width="0.5" />
<line x1="474.2" y1="42.6" x2="481.8" y2="42.6" stroke="#8c5a24" stroke-width="0.4" />
<polygon points="492,41 499,39.4 498,44 492.6,49.4" fill="none" stroke="#eda253" stroke-width="0.6"/>
<line x1="493.4" y1="48.8" x2="503" y2="40" stroke="#e8e8e8" stroke-width="1.5" />
<line x1="507.5" y1="38.8" x2="507.5" y2="49.2" stroke="#d8d8d8" stroke-width="0.9" />
<line x1="515.8" y1="38.8" x2="515.8" y2="49.2" stroke="#d8d8d8" stroke-width="0.9" />
<line x1="506.8" y1="39.6" x2="516.4" y2="39.6" stroke="#a8a8a8" stroke-width="0.5" />
<line x1="506.8" y1="48.4" x2="516.4" y2="48.4" stroke="#a8a8a8" stroke-width="0.5" />
<line x1="511.6" y1="39.4" x2="511.6" y2="49" stroke="#eda253" stroke-width="0.8" />
<circle cx="511.6" cy="39.4" r="0.8" fill="#eda253" />
<circle cx="511.6" cy="48.6" r="0.7" fill="#eda253" />
<line x1="522" y1="39.4" x2="522" y2="48.6" stroke="#bdbdbd" stroke-width="0.6" stroke-dasharray="1 0.9"/>
<line x1="525" y1="39.4" x2="525" y2="43" stroke="#bdbdbd" stroke-width="0.6" stroke-dasharray="1 0.9"/>
<line x1="523.6" y1="48.4" x2="532" y2="40.4" stroke="#e8e8e8" stroke-width="1.5" />
<circle cx="521.8" cy="49" r="0.6" fill="#eda253" />
<rect x="541.4" y="39" width="9.2" height="9.2" fill="#5cbf93" />
<rect x="547.6" y="45.4" width="4.8" height="4.6" fill="#3a3a3a" />
<line x1="548.2" y1="46.2" x2="551.8" y2="49.8" stroke="#efefef" stroke-width="0.8" />
<line x1="551.8" y1="46.2" x2="548.2" y2="49.8" stroke="#efefef" stroke-width="0.8" />
<path d="M556.4 40 Q561.6 42.6 566.6 40 V46 Q561.6 50.6 556.4 46 Z" fill="#5cbf93" stroke="none" stroke-width="1" />
<rect x="562.6" y="45.4" width="4.8" height="4.6" fill="#3a3a3a" />
<line x1="563" y1="46.2" x2="566.6" y2="49.8" stroke="#efefef" stroke-width="0.8" />
<line x1="566.6" y1="46.2" x2="563" y2="49.8" stroke="#efefef" stroke-width="0.8" />
<path d="M570.8 41.4 Q573 38.4 576 40.6 Q579 38.4 581.2 41.4 V45.4 Q576 51 570.8 45.4 Z" fill="#5cbf93" stroke="none" stroke-width="1" />
<rect x="577.4" y="45.4" width="4.8" height="4.6" fill="#3a3a3a" />
<line x1="577.8" y1="46.2" x2="581.4" y2="49.8" stroke="#efefef" stroke-width="0.8" />
<line x1="581.4" y1="46.2" x2="577.8" y2="49.8" stroke="#efefef" stroke-width="0.8" />
<polygon points="590.4,38.8 595.6,41.2 595.6,47 590.4,49.6 585.2,47 585.2,41.2" fill="#5cbf93" />
<path d="M585.2 41.2 L590.4 43.8 L595.6 41.2 M590.4 43.8 V49.6" fill="none" stroke="#2e6a50" stroke-width="0.6" />
<rect x="592.4" y="45.4" width="4.8" height="4.6" fill="#3a3a3a" />
<line x1="592.8" y1="46.2" x2="596.4" y2="49.8" stroke="#efefef" stroke-width="0.8" />
<line x1="596.4" y1="46.2" x2="592.8" y2="49.8" stroke="#efefef" stroke-width="0.8" />
<path d="M600.2 48.8 Q599.6 43.4 604.4 42.8 Q606.6 42.4 606.4 39.2 Q610.6 41.8 608 45 Q606 46.6 604 46 Q603.4 47.6 604.2 48.8 Z" fill="#5cbf93" stroke="none" stroke-width="1" />
<rect x="606.6" y="45.4" width="4.8" height="4.6" fill="#3a3a3a" />
<line x1="607" y1="46.2" x2="610.6" y2="49.8" stroke="#efefef" stroke-width="0.8" />
<line x1="610.6" y1="46.2" x2="607" y2="49.8" stroke="#efefef" stroke-width="0.8" />
<rect x="614.6" y="39" width="10.4" height="10.4" fill="#5cbf93" />
<rect x="614.6" y="39" width="10.4" height="1.6" fill="#d8d8d8" />
<rect x="616.8" y="42.2" width="6" height="5.8" fill="#f2f2f2" />
<rect x="616.8" y="42.2" width="2" height="1.93" fill="#222" />
<rect x="616.8" y="46.06" width="2" height="1.93" fill="#222" />
<rect x="618.8" y="44.13" width="2" height="1.93" fill="#222" />
<rect x="620.8" y="42.2" width="2" height="1.93" fill="#222" />
<rect x="620.8" y="46.06" width="2" height="1.93" fill="#222" />
<path d="M628.6 42.6 Q634.2 44.4 639.8 48.8" fill="none" stroke="#5cbf93" stroke-width="1.2" />
<path d="M639.8 42.6 Q634.2 44.4 628.6 48.8" fill="none" stroke="#5cbf93" stroke-width="1.2" />
<line x1="632.4" y1="39.2" x2="636" y2="42.8" stroke="#efefef" stroke-width="0.8" />
<line x1="636" y1="39.2" x2="632.4" y2="42.8" stroke="#efefef" stroke-width="0.8" />
<line x1="644.4" y1="39.6" x2="653.6" y2="49.2" stroke="#e4e4e4" stroke-width="1.3" />
<line x1="654" y1="39.6" x2="644.8" y2="49.2" stroke="#e4e4e4" stroke-width="1.3" />
<path d="M646 41 Q649.2 38.8 652.6 41" fill="none" stroke="#5cbf93" stroke-width="0.7" />
<path d="M645 46.8 Q645.6 49.6 648 49.8" fill="none" stroke="#5cbf93" stroke-width="0.7" />
<polygon points="799.6,40 804.4,40 802,37.8" fill="#d8d8d8" />
<circle cx="802" cy="44.2" r="1.9" fill="#6a6a6a" />
<polygon points="799.6,48.2 804.4,48.2 802,50.4" fill="#d8d8d8" />
<rect x="0" y="53.9" width="805.2" height="1.6" fill="#363636" />
<rect x="0" y="55.5" width="18.4" height="340" fill="#444444" />
<rect x="18.4" y="55.5" width="1.5" height="340" fill="#383838" />
<line x1="1" y1="58.6" x2="16.6" y2="58.6" stroke="#505050" stroke-width="0.6" />
<polygon points="6.9,63.1 6.9,72.7 9.2,70.6 10.8,74.1 12.3,73.4 10.8,70.1 13.7,69.9" fill="#ececec" />
<ellipse cx="8.3" cy="83" rx="5.3" ry="3.1" fill="none" stroke="#3db4c4" stroke-width="1" stroke-dasharray="1.7 1" transform="rotate(-38 8.3 83.0)"/>
<polygon points="8.6,81.4 8.6,89.08 10.44,87.4 11.72,90.2 12.92,89.64 11.72,87 14.04,86.84" fill="#ececec" />
<ellipse cx="7.6" cy="100.9" rx="5" ry="3" fill="none" stroke="#3db4c4" stroke-width="1" stroke-dasharray="1.7 1" transform="rotate(38 7.6 100.9)"/>
<line x1="9.4" y1="99.8" x2="14.8" y2="94.4" stroke="#ececec" stroke-width="1.3" />
<polygon points="7.4,102.2 9.2,98.8 10.8,100.4" fill="#ececec" />
<rect x="1.6" y="107.9" width="15.4" height="15" fill="#5285a6" />
<rect x="6.6" y="112.6" width="5.4" height="5.8" fill="#ececec" />
<line x1="9.3" y1="112.6" x2="9.3" y2="118.4" stroke="#b0b0b0" stroke-width="0.4" />
<line x1="6.6" y1="115.5" x2="12" y2="115.5" stroke="#b0b0b0" stroke-width="0.4" />
<polygon points="9.3,108.9 10.9,111.2 7.7,111.2" fill="#2fb4bc" />
<polygon points="9.3,122 10.9,119.8 7.7,119.8" fill="#2fb4bc" />
<polygon points="3.3,115.5 5.4,114 5.4,117" fill="#2fb4bc" />
<polygon points="15.4,115.5 13.2,114 13.2,117" fill="#2fb4bc" />
<circle cx="8.8" cy="131" r="5.3" fill="none" stroke="#2aa0ac" stroke-width="0.9" stroke-dasharray="26 7.3" transform="rotate(20 8.8 131)"/>
<polygon points="8.8,127.6 12,131 8.8,134.4 5.6,131" fill="#ececec" />
<circle cx="14.2" cy="131.6" r="0.8" fill="#3db4c4" />
<rect x="4.1" y="146" width="5.2" height="5.1" fill="#ececec" />
<line x1="6.7" y1="146" x2="6.7" y2="151" stroke="#b0b0b0" stroke-width="0.4" />
<line x1="4.1" y1="148.5" x2="9.3" y2="148.5" stroke="#b0b0b0" stroke-width="0.4" />
<rect x="4.4" y="140.4" width="10.1" height="10.1" fill="none" stroke="#3db4c4" stroke-width="0.8" stroke-dasharray="1.2 1.1"/>
<polygon points="9.1,171.7 14.1,177 9.1,182.3 4.1,177" fill="#eda253" />
<line x1="6.6" y1="174.3" x2="11.6" y2="179.7" stroke="#8c5a24" stroke-width="0.6" />
<line x1="11.6" y1="174.3" x2="6.6" y2="179.7" stroke="#8c5a24" stroke-width="0.6" />
<line x1="1.8" y1="186.8" x2="16.3" y2="186.8" stroke="#6a6a6a" stroke-width="0.9" />
<rect x="3.6" y="191.6" width="11.8" height="10.6" fill="#8c8c8c" />
<rect x="4.6" y="192.6" width="9.8" height="8.6" fill="#d8d8d8" />
<polygon points="9.5,194.2 11.8,196.9 9.5,199.6 7.2,196.9" fill="#333" />
<circle cx="9.5" cy="196.9" r="0.9" fill="#d8d8d8" />
<rect x="4.4" y="206.8" width="4.4" height="4.4" fill="none" stroke="#d0d0d0" stroke-width="0.6"/>
<rect x="10" y="206.8" width="4.6" height="4.4" fill="#e0e0e0" stroke="#d0d0d0" stroke-width="0.6"/>
<rect x="4.4" y="212.6" width="4.4" height="4.4" fill="none" stroke="#d0d0d0" stroke-width="0.6"/>
<rect x="10" y="212.6" width="4.6" height="4.4" fill="none" stroke="#d0d0d0" stroke-width="0.6"/>
<line x1="5.4" y1="209" x2="7.8" y2="209" stroke="#d0d0d0" stroke-width="0.5" />
<line x1="6.6" y1="207.8" x2="6.6" y2="210.2" stroke="#d0d0d0" stroke-width="0.5" />
<line x1="5.4" y1="214.8" x2="7.8" y2="214.8" stroke="#d0d0d0" stroke-width="0.5" />
<line x1="6.6" y1="213.6" x2="6.6" y2="216" stroke="#d0d0d0" stroke-width="0.5" />
<line x1="11.1" y1="214.8" x2="13.5" y2="214.8" stroke="#d0d0d0" stroke-width="0.5" />
<line x1="12.3" y1="213.6" x2="12.3" y2="216" stroke="#d0d0d0" stroke-width="0.5" />
<rect x="11.2" y="208.2" width="2.2" height="1.6" fill="#333" />
<rect x="4.4" y="223" width="4.2" height="11" fill="none" stroke="#d0d0d0" stroke-width="0.6"/>
<rect x="9.8" y="223" width="4.8" height="11" fill="#e0e0e0" stroke="#d0d0d0" stroke-width="0.6"/>
<line x1="6.5" y1="227" x2="6.5" y2="230" stroke="#d0d0d0" stroke-width="0.5" />
<line x1="5.4" y1="228.5" x2="7.6" y2="228.5" stroke="#d0d0d0" stroke-width="0.5" />
<rect x="11" y="227.6" width="2.4" height="1.8" fill="#333" />
<rect x="4.4" y="238.6" width="10.2" height="10.4" fill="none" stroke="#d0d0d0" stroke-width="0.6"/>
<line x1="6.8" y1="240.6" x2="12.6" y2="240.6" stroke="#d0d0d0" stroke-width="0.6" />
<rect x="5.4" y="240.1" width="0.9" height="0.9" fill="#d0d0d0" />
<line x1="6.8" y1="242.8" x2="12.6" y2="242.8" stroke="#d0d0d0" stroke-width="0.6" />
<rect x="5.4" y="242.3" width="0.9" height="0.9" fill="#d0d0d0" />
<line x1="6.8" y1="245" x2="12.6" y2="245" stroke="#d0d0d0" stroke-width="0.6" />
<rect x="5.4" y="244.5" width="0.9" height="0.9" fill="#d0d0d0" />
<line x1="6.8" y1="247.2" x2="12.6" y2="247.2" stroke="#d0d0d0" stroke-width="0.6" />
<rect x="5.4" y="246.7" width="0.9" height="0.9" fill="#d0d0d0" />
<rect x="19.9" y="55.6" width="568.1" height="309" fill="#646464" rx="1.2"/>
<rect x="21" y="56.8" width="565.2" height="16.2" fill="#444444" />
<text x="23.75" y="62.8" font-size="5" fill="#bfbfbf" textLength="10.25" lengthAdjust="spacingAndGlyphs" >View</text>
<text x="40" y="62.8" font-size="5" fill="#bfbfbf" textLength="17.75" lengthAdjust="spacingAndGlyphs" >Shading</text>
<text x="64" y="62.8" font-size="5" fill="#bfbfbf" textLength="17.25" lengthAdjust="spacingAndGlyphs" >Lighting</text>
<text x="87.75" y="62.8" font-size="5" fill="#bfbfbf" textLength="11.65" lengthAdjust="spacingAndGlyphs" >Show</text>
<text x="105.6" y="62.8" font-size="5" fill="#bfbfbf" textLength="19" lengthAdjust="spacingAndGlyphs" >Renderer</text>
<text x="130.9" y="62.8" font-size="5" fill="#bfbfbf" textLength="13.3" lengthAdjust="spacingAndGlyphs" >Panels</text>
<rect x="21" y="73" width="565.2" height="290.2" fill="#5e5e5e" />
<line x1="22.6" y1="65.6" x2="22.6" y2="72" stroke="#8a8a8a" stroke-width="0.6" />
<rect x="26" y="67" width="2.2" height="3.2" fill="#e4e4e4" />
<rect x="28.6" y="67.6" width="1.4" height="2" fill="#e4e4e4" />
<polygon points="30.4,68.6 32,67 32,70.2" fill="#e4e4e4" />
<rect x="33.8" y="66.4" width="2.4" height="1.6" fill="#e4e4e4" />
<rect x="33.8" y="68.6" width="2.4" height="2.8" fill="#3db4c4" />
<polygon points="37,67.6 38.8,66.2 38.8,69" fill="#e4e4e4" />
<rect x="39.2" y="66.6" width="1.4" height="2" fill="#e4e4e4" />
<circle cx="43.6" cy="69" r="1.8" fill="none" stroke="#3db4c4" stroke-width="0.8"/>
<rect x="42.4" y="66.2" width="2.4" height="1.2" fill="#e4e4e4" />
<polygon points="46,67.6 47.8,66.2 47.8,69" fill="#e4e4e4" />
<rect x="51" y="66.2" width="2.2" height="4.4" fill="#e8e8e8" />
<rect x="51.4" y="70.4" width="1.4" height="1" fill="#999" />
<path d="M57.4 71.6 L60.6 66.4 L61.2 70 Z" fill="#3db4c4" stroke="none" stroke-width="1" />
<line x1="57" y1="71.8" x2="62" y2="71.8" stroke="#cfcfcf" stroke-width="0.5" />
<line x1="65.4" y1="68" x2="68.4" y2="68" stroke="#e0e0e0" stroke-width="0.6" />
<line x1="66.9" y1="66.4" x2="66.9" y2="69.6" stroke="#e0e0e0" stroke-width="0.6" />
<path d="M66.4 71.8 L69.6 67.6 L70 70.4 Z" fill="#3db4c4" stroke="none" stroke-width="1" />
<path d="M73.2 65.3 H71.4 V72.4 H73.2 M77 65.3 H78.8 V72.4 H77" fill="none" stroke="#2fb03a" stroke-width="0.9" />
<line x1="73" y1="71.2" x2="77.2" y2="66.4" stroke="#3db4c4" stroke-width="0.9" />
<line x1="81.4" y1="65.6" x2="81.4" y2="72" stroke="#8a8a8a" stroke-width="0.6" />
<rect x="83.8" y="64.9" width="7.4" height="7.7" fill="#5285a6" />
<rect x="85.2" y="66.3" width="4.6" height="4.9" fill="#b8b8b8" />
<rect x="85.2" y="66.3" width="4.6" height="4.9" fill="none" stroke="#e6e6e6" stroke-width="0.5"/>
<rect x="92.6" y="66.9" width="6.6" height="3.8" fill="none" stroke="#e0e0e0" stroke-width="0.7"/>
<rect x="93.8" y="67.9" width="4.2" height="1.8" fill="#222" />
<rect x="101.4" y="66.3" width="5" height="5" fill="none" stroke="#e0e0e0" stroke-width="0.7"/>
<rect x="102.6" y="67.5" width="2.4" height="2.6" fill="#3db4c4" />
<rect x="108.8" y="66.5" width="4.6" height="4.8" fill="none" stroke="#707070" stroke-width="0.6"/>
<circle cx="111.1" cy="68.9" r="1" fill="#666" />
<rect x="115.8" y="66.2" width="5.8" height="5.4" fill="#3a3a3a" stroke="#b4b4b4" stroke-width="0.7"/>
<line x1="116.8" y1="68.9" x2="120.6" y2="68.9" stroke="#3db4c4" stroke-width="0.9" />
<line x1="118.7" y1="67" x2="118.7" y2="70.8" stroke="#111" stroke-width="0.9" />
<rect x="123.6" y="66.2" width="5.8" height="5.4" fill="#3a3a3a" stroke="#b4b4b4" stroke-width="0.7"/>
<line x1="124.8" y1="67.2" x2="128.2" y2="70.6" stroke="#111" stroke-width="0.9" />
<line x1="128.2" y1="67.2" x2="124.8" y2="70.6" stroke="#111" stroke-width="0.9" />
<circle cx="126.5" cy="68.9" r="0.9" fill="#3db4c4" />
<rect x="131.6" y="66.2" width="5.8" height="5.4" fill="#3a3a3a" stroke="#b4b4b4" stroke-width="0.7"/>
<rect x="133.5" y="67" width="2" height="3.8" fill="#3db4c4" />
<line x1="134.5" y1="67" x2="134.5" y2="70.8" stroke="#111" stroke-width="0.5" />
<line x1="140.4" y1="65.6" x2="140.4" y2="72" stroke="#8a8a8a" stroke-width="0.6" />
<polygon points="146.6,66 149.21,67.45 149.21,70.35 146.6,71.8 143.99,70.35 143.99,67.45" fill="none" stroke="#d4d4d4" stroke-width="0.6"/>
<path d="M143.99 67.45 L146.6 68.9 L149.21 67.45 M146.6 68.9 V71.8" fill="none" stroke="#d4d4d4" stroke-width="0.6" />
<rect x="150.4" y="64.9" width="7.6" height="7.9" fill="#5285a6" />
<polygon points="154.2,65.9 156.9,67.4 156.9,70.4 154.2,71.9 151.5,70.4 151.5,67.4" fill="#3db4c4" stroke="#d8f4f6" stroke-width="0.6"/>
<path d="M151.5 67.4 L154.2 68.9 L156.9 67.4 M154.2 68.9 V71.9" fill="none" stroke="#d8f4f6" stroke-width="0.6" />
<circle cx="161.8" cy="68.9" r="2.4" fill="#e8e8e8" />
<path d="M161.8 66.5 A2.4 2.4 0 0 1 161.8 71.3 Z" fill="#8a8a8a" stroke="none" stroke-width="1" />
<polygon points="169.8,65.9 172.5,67.4 172.5,70.4 169.8,71.9 167.1,70.4 167.1,67.4" fill="#2a8a98" stroke="#e4e4e4" stroke-width="0.6"/>
<path d="M167.1 67.4 L169.8 68.9 L172.5 67.4 M169.8 68.9 V71.9" fill="none" stroke="#e4e4e4" stroke-width="0.6" />
<rect x="175.4" y="66.5" width="4.4" height="4.8" fill="#5a5a5a" stroke="#8c8c8c" stroke-width="0.7"/>
<circle cx="177.6" cy="68.9" r="1.2" fill="#9a9a9a" />
<path d="M185.4 65.6 L186.6 69 L185.4 72.2 L184.2 69 Z" fill="#f0f0f0" stroke="none" stroke-width="1" />
<line x1="183" y1="66.4" x2="184.4" y2="68" stroke="#dcdcdc" stroke-width="0.5" />
<line x1="187.8" y1="66.4" x2="186.4" y2="68" stroke="#dcdcdc" stroke-width="0.5" />
<circle cx="194" cy="68.7" r="2" fill="#3db4c4" />
<rect x="190" y="69.6" width="2" height="1.6" fill="#bdbdbd" />
<line x1="199.2" y1="65.6" x2="199.2" y2="72" stroke="#8a8a8a" stroke-width="0.6" />
<circle cx="204.8" cy="67.8" r="2.3" fill="#d8d8d8" />
<path d="M202.6 70.6 H207 M203.4 71.8 L204.8 70.6 L206.2 71.8" fill="none" stroke="#3db4c4" stroke-width="0.6" />
<line x1="210.8" y1="70.6" x2="214.6" y2="67" stroke="#b8b8b8" stroke-width="1.8" />
<circle cx="214.4" cy="67.2" r="1.1" fill="#e8e8e8" />
<path d="M221.4 66.2 L219 68.9 L221.4 71.6" fill="none" stroke="#3db4c4" stroke-width="0.9" />
<path d="M221.6 66.2 A2.9 2.9 0 0 1 221.6 71.6" fill="none" stroke="#e8e8e8" stroke-width="0.9" />
<rect x="226.8" y="66.2" width="4.8" height="5.6" fill="#3a6068" />
<line x1="234.8" y1="65.6" x2="234.8" y2="72" stroke="#8a8a8a" stroke-width="0.6" />
<rect x="238.2" y="66.2" width="3.4" height="3.2" fill="none" stroke="#3db4c4" stroke-width="0.7"/>
<polygon points="240.4,67.6 240.4,71.63 241.37,70.75 242.04,72.22 242.67,71.93 242.04,70.54 243.26,70.46" fill="#ececec" />
<line x1="246.4" y1="65.6" x2="246.4" y2="72" stroke="#8a8a8a" stroke-width="0.6" />
<rect x="252" y="66" width="3.8" height="3.8" fill="#e4e4e4" />
<rect x="250.6" y="67.6" width="3.8" height="3.8" fill="#f2f2f2" stroke="#555" stroke-width="0.4"/>
<rect x="259.8" y="66" width="3.8" height="3.8" fill="none" stroke="#e4e4e4" stroke-width="0.6"/>
<rect x="258.4" y="67.6" width="3.8" height="3.8" fill="#f2f2f2" />
<rect x="266.4" y="66.2" width="5" height="5.4" fill="none" stroke="#e4e4e4" stroke-width="0.7"/>
<line x1="266.4" y1="66.2" x2="271.4" y2="71.6" stroke="#e4e4e4" stroke-width="0.6" />
<polygon points="266.4,71.6 271.4,71.6 271.4,66.2" fill="#2a2a2a" />
<line x1="274.4" y1="65.6" x2="274.4" y2="72" stroke="#8a8a8a" stroke-width="0.6" />
<circle cx="281.4" cy="68.9" r="2.1" fill="none" stroke="#ececec" stroke-width="1.1"/>
<line x1="281.4" y1="66" x2="281.4" y2="66.8" stroke="#ececec" stroke-width="0.9" />
<rect x="286.6" y="66" width="14.4" height="6" fill="#2b2b2b" />
<text x="288.4" y="70.7" font-size="4.6" fill="#cfcfcf" textLength="8" lengthAdjust="spacingAndGlyphs" >0.00</text>
<path d="M306.6 66.6 A2.4 2.4 0 0 0 306.6 71.2" fill="none" stroke="#ececec" stroke-width="0.9" />
<path d="M307 66.8 A2.2 2.2 0 0 1 307 71" fill="#ececec" stroke="none" stroke-width="1" />
<rect x="311" y="66" width="15" height="6" fill="#2b2b2b" />
<text x="313" y="70.7" font-size="4.6" fill="#cfcfcf" textLength="8.4" lengthAdjust="spacingAndGlyphs" >1.00</text>
<rect x="327.6" y="65" width="7.2" height="7.4" fill="#4a8cb0" />
<circle cx="331.2" cy="68.7" r="2.3" fill="none" stroke="#3db4c4" stroke-width="0.8"/>
<line x1="329.6" y1="68.7" x2="332.8" y2="68.7" stroke="#7fe0e6" stroke-width="0.7" />
<rect x="335.75" y="65" width="81.15" height="7.25" fill="#575757" />
<rect x="408.6" y="65" width="8.3" height="7.25" fill="#616161" />
<text x="337.4" y="70.6" font-size="5" fill="#d6d6d6" textLength="55" lengthAdjust="spacingAndGlyphs" >ACES 1.0 SDR-video (sRGB)</text>
<polygon points="411,67.8 415,67.8 413,69.9" fill="#ececec" />
<defs><clipPath id="vpclip"><rect x="21.0" y="73.0" width="565.2" height="290.2"/></clipPath></defs>
<g clip-path="url(#vpclip)">
<polygon points="152,213.7 407.7,161 577,250.3 242.6,363.4" fill="#6f696f" />
<path d="M152 213.7L407.7 161M153.18 215.65L410.13 162.28M154.38 217.64L412.59 163.58M155.6 219.65L415.08 164.89M156.83 221.68L417.6 166.22M158.08 223.75L420.14 167.56M159.36 225.85L422.72 168.92M160.64 227.98L425.33 170.3M161.95 230.15L427.97 171.69M163.28 232.34L430.64 173.1M164.63 234.57L433.34 174.52M166 236.83L436.08 175.97M167.39 239.13L438.85 177.43M168.8 241.46L441.65 178.91M170.23 243.83L444.49 180.4M171.69 246.24L447.36 181.92M173.17 248.68L450.27 183.46M174.67 251.16L453.22 185.01M176.2 253.69L456.21 186.59M177.75 256.25L459.23 188.18M179.33 258.86L462.29 189.8M180.93 261.51L465.4 191.43M182.56 264.2L468.54 193.09M184.22 266.94L471.72 194.77M185.91 269.73L474.95 196.47M187.62 272.56L478.22 198.2M189.37 275.44L481.53 199.94M191.14 278.37L484.89 201.72M192.95 281.36L488.3 203.51M194.78 284.39L491.75 205.33M196.66 287.48L495.25 207.18M198.56 290.63L498.79 209.05M200.5 293.83L502.39 210.95M202.47 297.1L506.04 212.87M204.48 300.42L509.74 214.82M206.53 303.8L513.49 216.8M208.62 307.25L517.3 218.81M210.75 310.77L521.16 220.85M212.91 314.35L525.08 222.91M215.12 318L529.05 225.01M217.38 321.72L533.09 227.14M219.67 325.52L537.19 229.3M222.02 329.39L541.34 231.49M224.41 333.34L545.56 233.72M226.85 337.37L549.85 235.98M229.34 341.49L554.2 238.27M231.88 345.69L558.62 240.6M234.48 349.98L563.11 242.97M237.13 354.36L567.66 245.38M239.83 358.83L572.29 247.82M242.6 363.4L577 250.3" fill="none" stroke="#4cdd9f" stroke-width="0.85" stroke-opacity="0.8"/>
<path d="M152 213.7L242.6 363.4M158.26 212.41L251.6 360.35M164.47 211.13L260.48 357.35M170.62 209.86L269.23 354.39M176.72 208.61L277.87 351.47M182.76 207.36L286.38 348.59M188.74 206.13L294.78 345.75M194.67 204.91L303.06 342.95M200.55 203.69L311.23 340.19M206.38 202.49L319.29 337.46M212.15 201.3L327.25 334.77M217.88 200.12L335.1 332.12M223.55 198.95L342.85 329.49M229.18 197.79L350.49 326.91M234.76 196.64L358.04 324.36M240.29 195.5L365.49 321.84M245.77 194.37L372.85 319.35M251.2 193.25L380.11 316.89M256.59 192.14L387.28 314.47M261.93 191.04L394.36 312.07M267.23 189.95L401.35 309.71M272.48 188.87L408.26 307.37M277.69 187.79L415.08 305.06M282.86 186.73L421.82 302.79M287.98 185.67L428.47 300.53M293.06 184.63L435.05 298.31M298.1 183.59L441.54 296.11M303.1 182.56L447.96 293.94M308.05 181.54L454.31 291.8M312.97 180.52L460.57 289.68M317.85 179.52L466.77 287.58M322.68 178.52L472.89 285.51M327.48 177.53L478.94 283.47M332.24 176.55L484.92 281.44M336.96 175.58L490.84 279.44M341.65 174.61L496.68 277.47M346.29 173.66L502.46 275.51M350.91 172.71L508.17 273.58M355.48 171.76L513.82 271.67M360.02 170.83L519.41 269.78M364.52 169.9L524.94 267.91M368.99 168.98L530.4 266.06M373.42 168.06L535.81 264.23M377.82 167.16L541.15 262.42M382.19 166.26L546.44 260.64M386.52 165.36L551.67 258.87M390.82 164.48L556.84 257.12M395.09 163.6L561.96 255.39M399.33 162.73L567.03 253.67M403.53 161.86L572.04 251.98M407.7 161L577 250.3" fill="none" stroke="#4cdd9f" stroke-width="0.92" />
</g>
<line x1="352.4" y1="226" x2="352.4" y2="196" stroke="#27d427" stroke-width="0.8" />
<polygon points="352.4,188.4 354.6,197.6 350.2,197.6" fill="#22e022" />
<line x1="347.4" y1="227.4" x2="333" y2="216.6" stroke="#e03020" stroke-width="0.8" />
<polygon points="328.4,212.4 334.6,214.4 331.4,218.6" fill="#f01810" />
<line x1="359.6" y1="229.4" x2="381" y2="223.6" stroke="#2030e0" stroke-width="0.8" />
<polygon points="390.4,221 381.4,220.6 382.4,226.2" fill="#1018f0" />
<rect x="347.2" y="226.6" width="8.4" height="8.8" fill="none" stroke="#cfc87a" stroke-width="0.8"/>
<polygon points="357,213.4 361.4,212 364.6,214 360,215.6" fill="#30e860" />
<polygon points="336.4,190.6 339.4,192.4 339.6,198.6 336.6,196.4" fill="#3a78f0" />
<polygon points="374.2,197.2 379.6,196 379.8,201.6 374.4,203" fill="none" stroke="#e07a48" stroke-width="0.9"/>
<rect x="375.8" y="198.4" width="2.4" height="2.6" fill="none" stroke="#e07a48" stroke-width="0.6"/>
<line x1="31.6" y1="351.5" x2="31.6" y2="345.6" stroke="#22c022" stroke-width="1" />
<line x1="31.5" y1="351.5" x2="29.9" y2="350.3" stroke="#e02020" stroke-width="0.9" />
<line x1="31.5" y1="351.6" x2="36.4" y2="350.8" stroke="#2030e0" stroke-width="1" />
<text x="31.7" y="346" font-size="4" fill="#22d022" text-anchor="middle" font-weight="bold" >y</text>
<text x="28.5" y="348.4" font-size="4" fill="#f01818" text-anchor="middle" font-weight="bold" >x</text>
<text x="37.9" y="349.8" font-size="4" fill="#2030f0" text-anchor="middle" font-weight="bold" >z</text>
<text x="295" y="359.4" font-size="4.8" fill="#f4f4f4" font-weight="bold" textLength="11.5" lengthAdjust="spacingAndGlyphs" >persp</text>
<rect x="20.4" y="364.6" width="567.6" height="30.9" fill="#444444" />
<rect x="587.4" y="365.4" width="2" height="30.1" fill="#4a4a4a" />
<rect x="20" y="364.6" width="567.4" height="1.4" fill="#3a3a3a" />
<rect x="20" y="366" width="5" height="14.4" fill="#484848" />
<rect x="21.6" y="368" width="1.4" height="0.8" fill="#555555" />
<rect x="21.6" y="369.7" width="1.4" height="0.8" fill="#555555" />
<rect x="21.6" y="371.4" width="1.4" height="0.8" fill="#555555" />
<rect x="21.6" y="373.1" width="1.4" height="0.8" fill="#555555" />
<rect x="21.6" y="374.8" width="1.4" height="0.8" fill="#555555" />
<rect x="21.6" y="376.5" width="1.4" height="0.8" fill="#555555" />
<rect x="21.6" y="378.2" width="1.4" height="0.8" fill="#555555" />
<rect x="25" y="366.9" width="439.5" height="12.9" fill="#2b2b2b" />
<rect x="27.3" y="367.4" width="2.7" height="12" fill="#6a6a6a" />
<text x="28.6" y="376.8" font-size="4.4" fill="#f0f0f0" text-anchor="middle" >1</text>
<line x1="41.25" y1="373" x2="41.25" y2="378.3" stroke="#c4c4c4" stroke-width="0.8" />
<text x="41.95" y="371.4" font-size="4.3" fill="#a6a6a6" >5</text>
<line x1="59.38" y1="373" x2="59.38" y2="378.3" stroke="#c4c4c4" stroke-width="0.8" />
<text x="60.08" y="371.4" font-size="4.3" fill="#a6a6a6" >10</text>
<line x1="77.5" y1="373" x2="77.5" y2="378.3" stroke="#c4c4c4" stroke-width="0.8" />
<text x="78.2" y="371.4" font-size="4.3" fill="#a6a6a6" >15</text>
<line x1="95.62" y1="373" x2="95.62" y2="378.3" stroke="#c4c4c4" stroke-width="0.8" />
<text x="96.33" y="371.4" font-size="4.3" fill="#a6a6a6" >20</text>
<line x1="113.75" y1="373" x2="113.75" y2="378.3" stroke="#c4c4c4" stroke-width="0.8" />
<text x="114.45" y="371.4" font-size="4.3" fill="#a6a6a6" >25</text>
<line x1="131.88" y1="373" x2="131.88" y2="378.3" stroke="#c4c4c4" stroke-width="0.8" />
<text x="132.57" y="371.4" font-size="4.3" fill="#a6a6a6" >30</text>
<line x1="150" y1="373" x2="150" y2="378.3" stroke="#c4c4c4" stroke-width="0.8" />
<text x="150.7" y="371.4" font-size="4.3" fill="#a6a6a6" >35</text>
<line x1="168.12" y1="373" x2="168.12" y2="378.3" stroke="#c4c4c4" stroke-width="0.8" />
<text x="168.82" y="371.4" font-size="4.3" fill="#a6a6a6" >40</text>
<line x1="186.25" y1="373" x2="186.25" y2="378.3" stroke="#c4c4c4" stroke-width="0.8" />
<text x="186.95" y="371.4" font-size="4.3" fill="#a6a6a6" >45</text>
<line x1="204.38" y1="373" x2="204.38" y2="378.3" stroke="#c4c4c4" stroke-width="0.8" />
<text x="205.07" y="371.4" font-size="4.3" fill="#a6a6a6" >50</text>
<line x1="222.5" y1="373" x2="222.5" y2="378.3" stroke="#c4c4c4" stroke-width="0.8" />
<text x="223.2" y="371.4" font-size="4.3" fill="#a6a6a6" >55</text>
<line x1="240.62" y1="373" x2="240.62" y2="378.3" stroke="#c4c4c4" stroke-width="0.8" />
<text x="241.32" y="371.4" font-size="4.3" fill="#a6a6a6" >60</text>
<line x1="258.75" y1="373" x2="258.75" y2="378.3" stroke="#c4c4c4" stroke-width="0.8" />
<text x="259.45" y="371.4" font-size="4.3" fill="#a6a6a6" >65</text>
<line x1="276.88" y1="373" x2="276.88" y2="378.3" stroke="#c4c4c4" stroke-width="0.8" />
<text x="277.57" y="371.4" font-size="4.3" fill="#a6a6a6" >70</text>
<line x1="295" y1="373" x2="295" y2="378.3" stroke="#c4c4c4" stroke-width="0.8" />
<text x="295.7" y="371.4" font-size="4.3" fill="#a6a6a6" >75</text>
<line x1="313.12" y1="373" x2="313.12" y2="378.3" stroke="#c4c4c4" stroke-width="0.8" />
<text x="313.82" y="371.4" font-size="4.3" fill="#a6a6a6" >80</text>
<line x1="331.25" y1="373" x2="331.25" y2="378.3" stroke="#c4c4c4" stroke-width="0.8" />
<text x="331.95" y="371.4" font-size="4.3" fill="#a6a6a6" >85</text>
<line x1="349.38" y1="373" x2="349.38" y2="378.3" stroke="#c4c4c4" stroke-width="0.8" />
<text x="350.07" y="371.4" font-size="4.3" fill="#a6a6a6" >90</text>
<line x1="367.5" y1="373" x2="367.5" y2="378.3" stroke="#c4c4c4" stroke-width="0.8" />
<text x="368.2" y="371.4" font-size="4.3" fill="#a6a6a6" >95</text>
<line x1="385.62" y1="373" x2="385.62" y2="378.3" stroke="#c4c4c4" stroke-width="0.8" />
<text x="386.32" y="371.4" font-size="4.3" fill="#a6a6a6" >100</text>
<line x1="403.75" y1="373" x2="403.75" y2="378.3" stroke="#c4c4c4" stroke-width="0.8" />
<text x="404.45" y="371.4" font-size="4.3" fill="#a6a6a6" >105</text>
<line x1="421.88" y1="373" x2="421.88" y2="378.3" stroke="#c4c4c4" stroke-width="0.8" />
<text x="422.57" y="371.4" font-size="4.3" fill="#a6a6a6" >110</text>
<line x1="440" y1="373" x2="440" y2="378.3" stroke="#c4c4c4" stroke-width="0.8" />
<text x="440.7" y="371.4" font-size="4.3" fill="#a6a6a6" >115</text>
<line x1="458.12" y1="373" x2="458.12" y2="378.3" stroke="#c4c4c4" stroke-width="0.8" />
<text x="458.82" y="371.4" font-size="4.3" fill="#a6a6a6" >120</text>
<rect x="468" y="369.75" width="36.5" height="8.75" fill="#2b2b2b" />
<text x="470" y="376.2" font-size="4.6" fill="#d8d8d8" >1</text>
<rect x="508.2" y="370.3" width="1" height="5.6" fill="#dcdcdc" />
<polygon points="512.6,370.3 512.6,375.9 509.6,373.1" fill="#dcdcdc" />
<polygon points="515.6,370.3 515.6,375.9 512.6,373.1" fill="#dcdcdc" />
<rect x="518.8" y="370.3" width="1" height="5.6" fill="#dcdcdc" />
<polygon points="524.6,370.3 524.6,375.9 520.4,373.1" fill="#dcdcdc" />
<rect x="528.2" y="370.1" width="1.1" height="6" fill="#e8822c" />
<polygon points="533.8,370.3 533.8,375.9 529.8,373.1" fill="#dcdcdc" />
<polygon points="543.6,369.9 543.6,376.3 538,373.1" fill="#dcdcdc" />
<polygon points="548.2,369.9 548.2,376.3 553.6,373.1" fill="#dcdcdc" />
<polygon points="557.8,370.3 557.8,375.9 561.8,373.1" fill="#dcdcdc" />
<rect x="562.4" y="370.1" width="1.1" height="6" fill="#e8822c" />
<polygon points="567.6,370.3 567.6,375.9 571.8,373.1" fill="#dcdcdc" />
<rect x="572" y="370.3" width="1" height="5.6" fill="#dcdcdc" />
<polygon points="576.4,370.3 576.4,375.9 579.4,373.1" fill="#dcdcdc" />
<polygon points="579.4,370.3 579.4,375.9 582.4,373.1" fill="#dcdcdc" />
<rect x="582.6" y="370.3" width="1" height="5.6" fill="#dcdcdc" />
<rect x="20" y="381.2" width="567.4" height="1" fill="#3c3c3c" />
<rect x="21.6" y="385" width="1.4" height="0.8" fill="#555555" />
<rect x="21.6" y="386.7" width="1.4" height="0.8" fill="#555555" />
<rect x="21.6" y="388.4" width="1.4" height="0.8" fill="#555555" />
<rect x="21.6" y="390.1" width="1.4" height="0.8" fill="#555555" />
<rect x="21.6" y="391.8" width="1.4" height="0.8" fill="#555555" />
<rect x="21.6" y="393.5" width="1.4" height="0.8" fill="#555555" />
<rect x="25" y="384.4" width="36.9" height="10.6" fill="#2b2b2b" />
<text x="27.6" y="391.6" font-size="4.6" fill="#d8d8d8" >1</text>
<rect x="66" y="384.4" width="36.25" height="10.6" fill="#2b2b2b" />
<text x="68.4" y="391.6" font-size="4.6" fill="#d8d8d8" >1</text>
<rect x="106.6" y="385" width="91.9" height="9" fill="#666666" rx="1"/>
<rect x="107.9" y="385.8" width="5.3" height="7.4" fill="#8e8e8e" rx="0.6"/>
<rect x="191.6" y="385.8" width="5.6" height="7.4" fill="#8e8e8e" rx="0.6"/>
<text x="115.6" y="391.4" font-size="4.6" fill="#e6e6e6" >1</text>
<text x="182.9" y="391.4" font-size="4.6" fill="#e6e6e6" textLength="6.85" lengthAdjust="spacingAndGlyphs" >120</text>
<rect x="257.25" y="384.4" width="36.75" height="10.6" fill="#2b2b2b" />
<text x="259.4" y="391.6" font-size="4.6" fill="#d8d8d8" textLength="7.6" lengthAdjust="spacingAndGlyphs" >120</text>
<rect x="297.75" y="384.4" width="36.25" height="10.6" fill="#2b2b2b" />
<text x="299.9" y="391.6" font-size="4.6" fill="#d8d8d8" textLength="7.7" lengthAdjust="spacingAndGlyphs" >200</text>
<line x1="337" y1="385.4" x2="337" y2="394" stroke="#8a8a8a" stroke-width="0.7" />
<polygon points="343.8,385 348.2,385 348.2,392.6 346,390.4 343.8,392.6" fill="#e86a30" />
<circle cx="348.6" cy="386" r="1.1" fill="#d8d8d8" />
<line x1="355.4" y1="385.4" x2="355.4" y2="394" stroke="#8a8a8a" stroke-width="0.7" />
<polygon points="362,388.2 365.6,388.2 363.8,390.3" fill="#8a8a8a" />
<rect x="369" y="385" width="42" height="9" fill="#383838" />
<rect x="369" y="385" width="42" height="9" fill="none" stroke="#4c4c4c" stroke-width="0.5"/>
<text x="371" y="391.8" font-size="4.8" fill="#d0d0d0" textLength="36.25" lengthAdjust="spacingAndGlyphs" >No Character Set</text>
<polygon points="416.2,388.2 419.8,388.2 418,390.3" fill="#8a8a8a" />
<rect x="424" y="385" width="41" height="9" fill="#383838" />
<rect x="424" y="385" width="41" height="9" fill="none" stroke="#4c4c4c" stroke-width="0.5"/>
<text x="426" y="391.8" font-size="4.8" fill="#d0d0d0" textLength="31.6" lengthAdjust="spacingAndGlyphs" >No Anim Layer</text>
<line x1="470" y1="385.4" x2="470" y2="394" stroke="#8a8a8a" stroke-width="0.7" />
<rect x="475.75" y="385" width="40" height="8.6" fill="#595959" />
<rect x="507.25" y="385" width="8.5" height="8.6" fill="#626262" />
<text x="477" y="391.6" font-size="4.8" fill="#d6d6d6" textLength="13" lengthAdjust="spacingAndGlyphs" >24 fps</text>
<polygon points="510,388.2 514,388.2 512,390.3" fill="#ececec" />
<path d="M523.4 391 H522.8 A1.9 1.9 0 0 1 522.8 387.2 H527.6 A1.9 1.9 0 0 1 528.6 390.4" fill="none" stroke="#e4e4e4" stroke-width="0.9" />
<circle cx="527.4" cy="391.6" r="1.5" fill="none" stroke="#e4e4e4" stroke-width="0.6"/>
<rect x="532.75" y="384.75" width="9.75" height="10.15" fill="#4a90c0" />
<rect x="534.2" y="386.8" width="6.8" height="5.6" fill="#c8703a" />
<rect x="534.2" y="386.8" width="6.8" height="1.4" fill="#e8e8e8" />
<rect x="535.4" y="389.4" width="1.4" height="1.4" fill="#f2f2f2" />
<rect x="537.6" y="389.4" width="1.4" height="1.4" fill="#f2f2f2" />
<circle cx="541" cy="386.6" r="0.9" fill="#f2f2f2" />
<line x1="546.9" y1="385.4" x2="546.9" y2="394" stroke="#8a8a8a" stroke-width="0.7" />
<polygon points="552,388.4 553.8,388.4 556,386.2 556,393 553.8,390.8 552,390.8" fill="#e4e4e4" />
<path d="M557.2 387.6 Q558.6 389.6 557.2 391.6" fill="none" stroke="#e4e4e4" stroke-width="0.6" />
<path d="M558.6 386.6 Q560.6 389.6 558.6 392.6" fill="none" stroke="#e4e4e4" stroke-width="0.6" />
<circle cx="568.1" cy="389.6" r="3.2" fill="none" stroke="#dcdcdc" stroke-width="0.8"/>
<rect x="567.4" y="388.2" width="1.4" height="2.8" fill="#e8822c" />
<circle cx="581.6" cy="387" r="1.1" fill="#e8822c" />
<path d="M579 393.6 L581 390.6 L580.4 388.6 L583.6 389.4 M581 390.6 L583.4 392.8 M578.4 389.4 L580.4 388.6" fill="none" stroke="#e8822c" stroke-width="1" />
<circle cx="577.6" cy="386.2" r="1.3" fill="none" stroke="#d8d8d8" stroke-width="0.6"/>
<rect x="588" y="55.5" width="1.75" height="340" fill="#383838" />
<rect x="589.75" y="55.5" width="215.45" height="340" fill="#444444" />
<rect x="589.75" y="57" width="215.45" height="6.2" fill="#3a3a3a" />
<rect x="590.6" y="57" width="23" height="6.2" fill="#3d3d3d" />
<line x1="614.1" y1="57" x2="614.1" y2="63.2" stroke="#303030" stroke-width="0.8" />
<text x="595.8" y="62" font-size="4.9" fill="#8a8a8a" textLength="10.8" lengthAdjust="spacingAndGlyphs" >XGen</text>
<rect x="614.6" y="57" width="69" height="6.6" fill="#444444" />
<text x="620.3" y="62" font-size="4.9" fill="#f0f0f0" font-weight="bold" textLength="55.8" lengthAdjust="spacingAndGlyphs" >Channel Box / Layer Editor</text>
<rect x="684.8" y="57" width="43" height="6.2" fill="#3d3d3d" />
<line x1="728.3" y1="57" x2="728.3" y2="63.2" stroke="#303030" stroke-width="0.8" />
<text x="689" y="62" font-size="4.9" fill="#8a8a8a" textLength="33.8" lengthAdjust="spacingAndGlyphs" >Attribute Editor</text>
<rect x="729.2" y="57" width="30.4" height="6.2" fill="#3d3d3d" />
<line x1="760.1" y1="57" x2="760.1" y2="63.2" stroke="#303030" stroke-width="0.8" />
<text x="735.7" y="62" font-size="4.9" fill="#8a8a8a" textLength="17.9" lengthAdjust="spacingAndGlyphs" >Outliner</text>
<polygon points="784.5,65.2 786.2,68 782.8,68" fill="#36c436" />
<line x1="784.5" y1="68" x2="784.5" y2="69.6" stroke="#c8c8c8" stroke-width="0.6" />
<line x1="784.5" y1="69.6" x2="782.6" y2="71" stroke="#c8c8c8" stroke-width="0.5" />
<line x1="784.5" y1="69.6" x2="786.4" y2="71" stroke="#c8c8c8" stroke-width="0.5" />
<circle cx="782.4" cy="71" r="1" fill="#3a60e8" />
<circle cx="786.6" cy="71" r="1" fill="#e03030" />
<circle cx="793.2" cy="68.6" r="2.9" fill="#3db4c4" />
<path d="M791.6 70.6 V68.6 A1.7 1.7 0 0 1 795 68.6 V70.6" fill="none" stroke="#d8f4f6" stroke-width="0.7" />
<rect x="794.4" y="69.6" width="1.8" height="1.6" fill="#d8d8d8" />
<rect x="799.2" y="66.6" width="5" height="5" fill="#3a4a50" />
<line x1="799.8" y1="71" x2="804" y2="66.2" stroke="#3db4c4" stroke-width="1" />
<line x1="799.2" y1="71.8" x2="804.4" y2="71.8" stroke="#bdbdbd" stroke-width="0.5" />
<text x="594.75" y="78.7" font-size="5" fill="#bfbfbf" textLength="19.85" lengthAdjust="spacingAndGlyphs" >Channels</text>
<text x="620.9" y="78.7" font-size="5" fill="#bfbfbf" textLength="8.7" lengthAdjust="spacingAndGlyphs" >Edit</text>
<text x="635.9" y="78.7" font-size="5" fill="#bfbfbf" textLength="14.3" lengthAdjust="spacingAndGlyphs" >Object</text>
<text x="656.6" y="78.7" font-size="5" fill="#bfbfbf" textLength="11.8" lengthAdjust="spacingAndGlyphs" >Show</text>
<text x="592.25" y="87.1" font-size="5.4" fill="#e2e2e2" textLength="20.35" lengthAdjust="spacingAndGlyphs" >pPlane1</text>
<rect x="774.5" y="88.8" width="30.7" height="65.8" fill="#2b2b2b" />
<text x="772" y="93.65" font-size="5" fill="#bfbfbf" text-anchor="end" >Translate X</text>
<text x="778.2" y="93.5" font-size="4.5" fill="#d2d2d2" >-1.559</text>
<text x="772" y="100.15" font-size="5" fill="#bfbfbf" text-anchor="end" >Translate Y</text>
<text x="778.2" y="100" font-size="4.5" fill="#d2d2d2" >1.98</text>
<line x1="774.5" y1="95.1" x2="805.2" y2="95.1" stroke="#353535" stroke-width="0.5" />
<text x="772" y="107.05" font-size="5" fill="#bfbfbf" text-anchor="end" >Translate Z</text>
<text x="778.2" y="106.9" font-size="4.5" fill="#d2d2d2" >3.656</text>
<line x1="774.5" y1="102" x2="805.2" y2="102" stroke="#353535" stroke-width="0.5" />
<text x="772" y="113.85" font-size="5" fill="#bfbfbf" text-anchor="end" >Rotate X</text>
<text x="778.2" y="113.7" font-size="4.5" fill="#d2d2d2" >0</text>
<line x1="774.5" y1="108.8" x2="805.2" y2="108.8" stroke="#353535" stroke-width="0.5" />
<text x="772" y="120.5" font-size="5" fill="#bfbfbf" text-anchor="end" >Rotate Y</text>
<text x="778.2" y="120.35" font-size="4.5" fill="#d2d2d2" >0</text>
<line x1="774.5" y1="115.45" x2="805.2" y2="115.45" stroke="#353535" stroke-width="0.5" />
<text x="772" y="127.35" font-size="5" fill="#bfbfbf" text-anchor="end" >Rotate Z</text>
<text x="778.2" y="127.2" font-size="4.5" fill="#d2d2d2" >0</text>
<line x1="774.5" y1="122.3" x2="805.2" y2="122.3" stroke="#353535" stroke-width="0.5" />
<text x="772" y="134" font-size="5" fill="#bfbfbf" text-anchor="end" >Scale X</text>
<text x="778.2" y="133.85" font-size="4.5" fill="#d2d2d2" >1</text>
<line x1="774.5" y1="128.95" x2="805.2" y2="128.95" stroke="#353535" stroke-width="0.5" />
<text x="772" y="139.75" font-size="5" fill="#bfbfbf" text-anchor="end" >Scale Y</text>
<text x="778.2" y="139.6" font-size="4.5" fill="#d2d2d2" >1</text>
<line x1="774.5" y1="134.7" x2="805.2" y2="134.7" stroke="#353535" stroke-width="0.5" />
<text x="772" y="146.45" font-size="5" fill="#bfbfbf" text-anchor="end" >Scale Z</text>
<text x="778.2" y="146.3" font-size="4.5" fill="#d2d2d2" >1</text>
<line x1="774.5" y1="141.4" x2="805.2" y2="141.4" stroke="#353535" stroke-width="0.5" />
<text x="772" y="153.25" font-size="5" fill="#bfbfbf" text-anchor="end" >Visibility</text>
<text x="778.2" y="153.1" font-size="4.5" fill="#d2d2d2" >on</text>
<line x1="774.5" y1="148.2" x2="805.2" y2="148.2" stroke="#353535" stroke-width="0.5" />
<text x="592.25" y="160.3" font-size="5" fill="#dcdcdc" font-weight="bold" textLength="20.25" lengthAdjust="spacingAndGlyphs" >SHAPES</text>
<rect x="591.6" y="162.25" width="213.6" height="5.75" fill="#3a3a3a" />
<text x="597.25" y="167" font-size="5.2" fill="#dcdcdc" textLength="36.25" lengthAdjust="spacingAndGlyphs" >pPlaneShape1</text>
<text x="592.25" y="173.7" font-size="5" fill="#dcdcdc" font-weight="bold" textLength="18.2" lengthAdjust="spacingAndGlyphs" >INPUTS</text>
<rect x="591.6" y="175.6" width="213.6" height="5.7" fill="#3a3a3a" />
<text x="597.25" y="180.7" font-size="5.2" fill="#dcdcdc" textLength="27.75" lengthAdjust="spacingAndGlyphs" >polyPlane1</text>
<rect x="774.5" y="182" width="30.7" height="20.2" fill="#2b2b2b" />
<text x="772" y="186.75" font-size="5" fill="#bfbfbf" text-anchor="end" >Width</text>
<rect x="774.5" y="181.8" width="12.5" height="6.4" fill="#363636" />
<text x="772" y="193.65" font-size="5" fill="#bfbfbf" text-anchor="end" >Height</text>
<rect x="774.5" y="188.7" width="15.5" height="6.4" fill="#363636" />
<text x="772" y="200.5" font-size="5" fill="#bfbfbf" text-anchor="end" >Subdivisions Width</text>
<text x="772" y="207.35" font-size="5" fill="#bfbfbf" text-anchor="end" >Subdivisions Height</text>
<text x="772" y="214" font-size="5" fill="#bfbfbf" text-anchor="end" >Create UVs</text>
<rect x="774.5" y="202.2" width="30.7" height="6.4" fill="#2b2b2b" />
<rect x="774.8" y="202.5" width="30.1" height="5.8" fill="none" stroke="#5285a6" stroke-width="0.7"/>
<rect x="776" y="203.2" width="5.8" height="4.6" fill="#5b8fc0" />
<text x="778.2" y="186.6" font-size="4.5" fill="#d2d2d2" >38</text>
<text x="778.2" y="193.5" font-size="4.5" fill="#d2d2d2" >49</text>
<text x="778.2" y="200.35" font-size="4.5" fill="#d2d2d2" >50</text>
<text x="776.4" y="207.2" font-size="4.5" fill="#ffffff" >50</text>
<rect x="774.5" y="209.2" width="2.5" height="6.2" fill="#9a9a9a" />
<text x="778.25" y="214" font-size="4.8" fill="#d8d8d8" textLength="22.25" lengthAdjust="spacingAndGlyphs" >Normaliz...</text>
<rect x="589.75" y="221.4" width="215.45" height="1.1" fill="#4e4e4e" />
<rect x="592" y="222.5" width="213.2" height="35.7" fill="#2b2b2b" />
<line x1="662.4" y1="260.2" x2="734" y2="260.2" stroke="#5e5e5e" stroke-width="0.8" />
<rect x="589.75" y="263.6" width="215.45" height="7.6" fill="#3c3c3c" />
<rect x="592.25" y="264.6" width="26.75" height="6.8" fill="#444444" />
<text x="597.5" y="270.1" font-size="5" fill="#f0f0f0" font-weight="bold" textLength="15.4" lengthAdjust="spacingAndGlyphs" >Display</text>
<rect x="620.4" y="264.8" width="21.85" height="6.4" fill="#3a3a3a" />
<line x1="642.7" y1="264.8" x2="642.7" y2="271.2" stroke="#303030" stroke-width="0.8" />
<line x1="619.7" y1="264.8" x2="619.7" y2="271.2" stroke="#303030" stroke-width="0.8" />
<text x="626" y="270.1" font-size="5" fill="#8a8a8a" font-weight="bold" textLength="10.6" lengthAdjust="spacingAndGlyphs" >Anim</text>
<text x="596" y="278" font-size="5" fill="#bfbfbf" textLength="12.75" lengthAdjust="spacingAndGlyphs" >Layers</text>
<text x="615.4" y="278" font-size="5" fill="#bfbfbf" textLength="17.1" lengthAdjust="spacingAndGlyphs" >Options</text>
<text x="639.1" y="278" font-size="5" fill="#bfbfbf" textLength="10" lengthAdjust="spacingAndGlyphs" >Help</text>
<polygon points="765.2,285 768.4,282.8 769,282.8 769,287.2 768.4,287.2" fill="#ececec" />
<rect x="769" y="283.2" width="2.2" height="3.4" fill="#3db4c4" />
<polygon points="775,285 778.2,282.8 778.8,282.8 778.8,287.2 778.2,287.2" fill="#ececec" />
<polygon points="778.8,283 781.2,285.6 780.2,287 778.8,287" fill="#3db4c4" />
<polygon points="787,285.6 789.4,283.2 791.4,284.6 790.6,287 788.6,287.6" fill="#ececec" />
<circle cx="791.7" cy="283.4" r="1.15" fill="#3db4c4" />
<polygon points="797,285.6 799.4,283.2 801.4,284.6 800.6,287 798.6,287.6" fill="#ececec" />
<circle cx="801.7" cy="283.4" r="1.15" fill="#3db4c4" />
<rect x="592.9" y="291" width="211" height="103.5" fill="#2b2b2b" />
<rect x="803.9" y="291" width="1.3" height="103.5" fill="#3e3e3e" />
<rect x="0" y="394.9" width="806.9" height="0.7" fill="#343434" />
</g>
<text y="426.6" font-family='"Liberation Serif", "DejaVu Serif", serif' font-size="20" font-style="italic" fill="#111111" stroke="#111111" stroke-width="0.28"><tspan x="256.5" textLength="56.2" lengthAdjust="spacingAndGlyphs" font-weight="bold">Figure</tspan> <tspan x="320.2" textLength="51.4" lengthAdjust="spacingAndGlyphs" font-weight="bold">15-25</tspan> <tspan x="378.9" textLength="29.7" lengthAdjust="spacingAndGlyphs">The</tspan> <tspan x="414.6" textLength="45.5" lengthAdjust="spacingAndGlyphs">plane</tspan> <tspan x="467" textLength="55.9" lengthAdjust="spacingAndGlyphs">created</tspan></text>
</svg></body></html>
